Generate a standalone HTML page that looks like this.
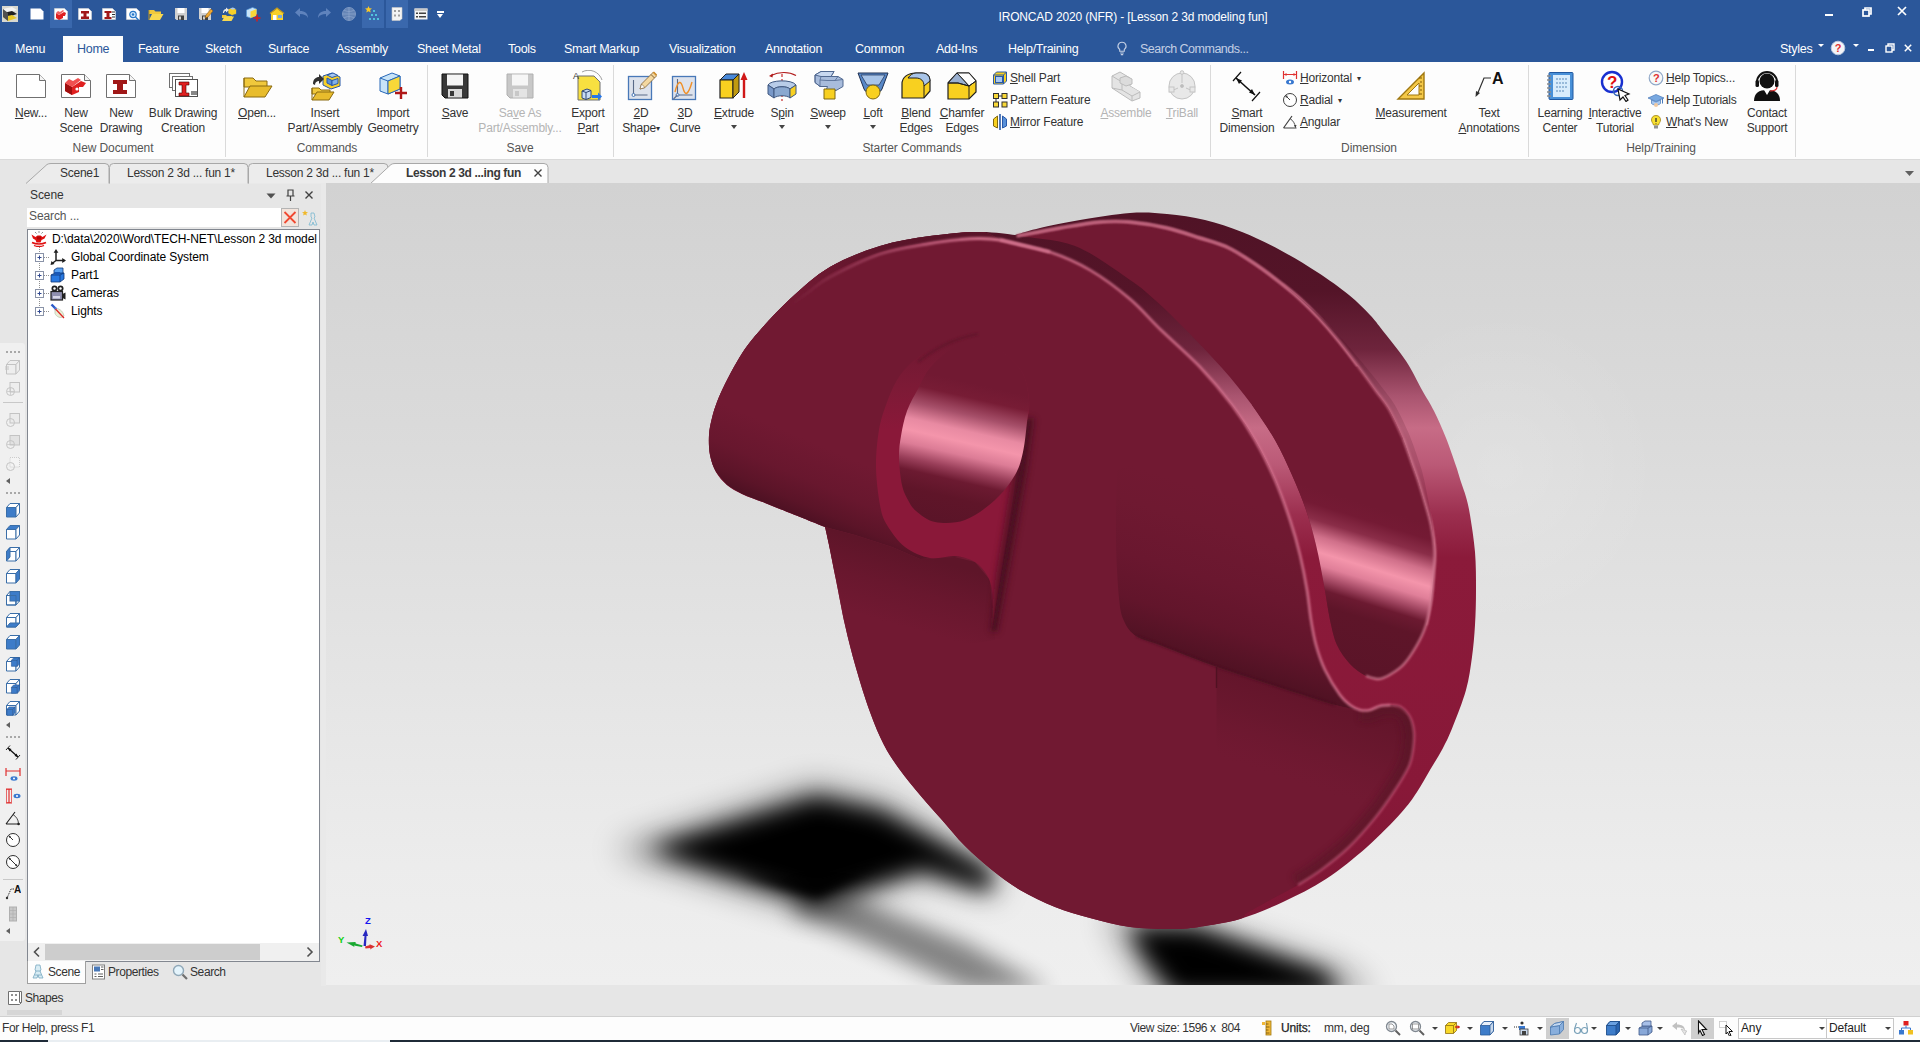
<!DOCTYPE html>
<html lang="en">
<head>
<meta charset="utf-8">
<title>IRONCAD 2020 (NFR) - [Lesson 2 3d modeling fun]</title>
<style>
*{box-sizing:border-box;margin:0;padding:0}
html,body{width:1920px;height:1042px;overflow:hidden;background:#e6e6e6;font-family:"Liberation Sans",sans-serif;font-size:12px;color:#262626}
.abs{position:absolute}
#app{position:absolute;left:0;top:0;width:1920px;height:1042px;overflow:hidden;background:#e6e6e6}
/* title + menu */
#titlebar{position:absolute;left:0;top:0;width:1920px;height:62px;background:#2b579a}
#title{position:absolute;left:933px;top:10px;width:400px;text-align:center;color:#fff;font-size:12px;white-space:nowrap;letter-spacing:-0.15px}
.mt{position:absolute;top:42px;color:#fff;font-size:12.5px;white-space:nowrap;letter-spacing:-0.27px}
#hometab{position:absolute;left:63px;top:36px;width:60px;height:27px;background:#fdfdfd}
/* ribbon */
#ribbon{position:absolute;left:0;top:62px;width:1920px;height:98px;background:#fdfdfd;border-bottom:1px solid #dadada}
.sep{position:absolute;top:65px;width:1px;height:92px;background:#dadada}
.gl{position:absolute;top:141px;font-size:12px;color:#555;white-space:nowrap;text-align:center;letter-spacing:-0.1px}
.bl{position:absolute;font-size:12px;color:#333;white-space:nowrap;text-align:center;line-height:15px;letter-spacing:-0.2px;transform:translateX(-50%)}
.bl.dis{color:#b4b4b4}
.sl{position:absolute;font-size:12px;color:#333;white-space:nowrap;letter-spacing:-0.2px}
u{text-decoration:underline;text-underline-offset:1px}
/* doc tabs */
#tabstrip{position:absolute;left:0;top:160px;width:1920px;height:24px;background:#e6e6e6}
.dt{position:absolute;top:166px;font-size:12px;color:#333;white-space:nowrap;letter-spacing:-0.25px}
/* left panel */
#ltool{position:absolute;left:0;top:184px;width:26px;height:810px;background:#e6e6e6}
#panel{position:absolute;left:26px;top:184px;width:295px;height:802px;background:#e6e6e6}
#tree{position:absolute;left:27px;top:229px;width:293px;height:733px;background:#fff;border:1px solid #828790}
.tr{position:absolute;font-size:12px;color:#000;white-space:nowrap;letter-spacing:-0.1px}
/* viewport */
#view{position:absolute;left:326px;top:183px;width:1594px;height:802px;overflow:hidden;background:#e4e4e4}
/* status */
#status{position:absolute;left:0;top:1016px;width:1920px;height:24px;background:#fdfdfd;border-top:1px solid #d0d0d0}
.st{position:absolute;top:1021px;font-size:12px;color:#333;white-space:nowrap;letter-spacing:-0.15px}
#taskbar{position:absolute;left:0;top:1040px;width:1920px;height:2px;background:#1f2b38}
</style>
</head>
<body>
<div id="app">

<!-- ============ TITLE BAR ============ -->
<div id="titlebar"></div>
<div id="title">IRONCAD 2020 (NFR) - [Lesson 2 3d modeling fun]</div>
<!--QAT-->
<div class="abs" style="left:50px;top:0;width:22px;height:28px;background:#3a68ad"></div>
<div class="abs" style="left:362px;top:0;width:22px;height:28px;background:#3a68ad"></div>
<div class="abs" style="left:386px;top:0;width:22px;height:28px;background:#3a68ad"></div>
<svg class="abs" style="left:2px;top:6px" width="16" height="16" viewBox="0 0 16 16"><rect x="0" y="0" width="16" height="16" fill="#d8d8d0"/><path d="M1 3l9-2 5 3-9 3z" fill="#f4f4f4"/><path d="M1 7l9-2 5 3-9 3z" fill="#202020"/><path d="M1 11l9-2 5 3-9 3z" fill="#e8c828"/><path d="M1 3v8l5 4V7z" fill="#505050"/></svg>
<svg class="abs" style="left:29px;top:6px" width="16" height="16" viewBox="0 0 16 16"><path d="M1.500 2.500h10l3 3v8h-13z" fill="#fff"/></svg>
<svg class="abs" style="left:53px;top:6px" width="16" height="16" viewBox="0 0 16 16"><path d="M1.500 2.500h10l3 3v8h-13z" fill="#fff" stroke="#d8d8d8" stroke-width=".6"/><path d="M3 7l3 2 5-3 2 1-1 3-2 0v2l-4 2-3-2z" fill="#e02020"/><path d="M5 5l2 1 3-2 1 1-5 4-3-2z" fill="#f06060"/></svg>
<svg class="abs" style="left:77px;top:6px" width="16" height="16" viewBox="0 0 16 16"><path d="M1.500 2.500h10l3 3v8h-13z" fill="#fff" stroke="#d8d8d8" stroke-width=".6"/><path d="M4 5h8v2.500H9.500v3H12V13H4v-2.500h2.500v-3H4z" fill="#a01818"/></svg>
<svg class="abs" style="left:101px;top:6px" width="16" height="16" viewBox="0 0 16 16"><path d="M1.500 2.500h10l3 3v8h-13z" fill="#fff" stroke="#d8d8d8" stroke-width=".6"/><path d="M3.500 5h7v2H8.500v4h2v2h-7v-2h2V7h-2z" fill="#a01818"/><path d="M11 6h3M11 8.500h3M11 11h3" stroke="#303030" stroke-width="1.200"/></svg>
<svg class="abs" style="left:125px;top:6px" width="16" height="16" viewBox="0 0 16 16"><path d="M1.500 2.500h10l3 3v8h-13z" fill="#fff" stroke="#d8d8d8" stroke-width=".6"/><circle cx="8" cy="8.500" r="3.200" fill="#d0e8fc" stroke="#2878c8" stroke-width="1.200"/><circle cx="8" cy="8.500" r="1.200" fill="#2878c8"/><path d="M10.500 11l3 3" stroke="#2878c8" stroke-width="1.400"/></svg>
<svg class="abs" style="left:148px;top:6px" width="16" height="16" viewBox="0 0 16 16"><path d="M1 4h5l1.500 1.500H13V8H1z" fill="#f0c83c"/><path d="M1 14l3-6h11.500l-3.500 6z" fill="#f8d850"/><path d="M1 14V4" stroke="#c09820"/></svg>
<svg class="abs" style="left:173px;top:6px" width="16" height="16" viewBox="0 0 16 16"><path d="M2 2h12v12H3.500L2 12.500z" fill="#d0d0d0"/><rect x="4.500" y="2" width="7" height="5" fill="#fff"/><rect x="5" y="9.500" width="6" height="4.500" fill="#404040"/><rect x="6" y="10.500" width="2" height="3" fill="#d0d0d0"/></svg>
<svg class="abs" style="left:197px;top:6px" width="16" height="16" viewBox="0 0 16 16"><path d="M2 2h12v12H3.500L2 12.500z" fill="#d0d0d0"/><rect x="4.500" y="2" width="7" height="5" fill="#fff"/><rect x="5" y="9.500" width="6" height="4.500" fill="#404040"/><rect x="6" y="10.500" width="2" height="3" fill="#d0d0d0"/><path d="M8 12l1-3 5-6 2 2-5 6z" fill="#f0a830" stroke="#805010" stroke-width=".5"/></svg>
<svg class="abs" style="left:221px;top:6px" width="16" height="16" viewBox="0 0 16 16"><path d="M1 9h4l1 1h5v2H1z" fill="#f0c83c"/><path d="M1 15l2.500-4.500H13L10.500 15z" fill="#f8d850"/><path d="M7 3l4.500-1.500 4 2v4.500L11 9.500l-4-2z" fill="#f8d028" stroke="#2858a8" stroke-width=".7"/><path d="M9 2.500l3-1 2.500 1.200-3 1z" fill="#a8c8f0"/><path d="M2 7c0-3 1.500-4 3-4V1.500L8 4 5 6.500V5c-1 0-2 .5-2 2z" fill="#e8e8e8"/></svg>
<svg class="abs" style="left:245px;top:6px" width="16" height="16" viewBox="0 0 16 16"><path d="M1.500 4l6-2.500 4 1.500v6.500l-6 2.500-4-1.500z" fill="#c8e4f8" stroke="#5898d8" stroke-width=".7"/><path d="M5.500 5.500l6-2.500v6.500l-6 2.500z" fill="#f8d838"/><path d="M12 8.500v7M8.500 12h7" stroke="#d02020" stroke-width="1.600"/></svg>
<svg class="abs" style="left:269px;top:6px" width="16" height="16" viewBox="0 0 16 16"><path d="M2 7l6-4.500L14 7v7H2z" fill="#f8d028"/><path d="M1 7.500l7-5.500 7 5.500" fill="none" stroke="#c09820" stroke-width="1.200"/><rect x="4" y="9" width="3.500" height="5" fill="#fff"/><rect x="9" y="9" width="4" height="3" fill="#78a8e0"/></svg>
<svg class="abs" style="left:293px;top:6px" width="16" height="16" viewBox="0 0 16 16"><path d="M2 6.500l5-4.500v3c5 0 8 2.500 8 7-1.500-3-4-4-8-4v3z" fill="#5f83bd"/></svg>
<svg class="abs" style="left:317px;top:6px" width="16" height="16" viewBox="0 0 16 16"><path d="M14 6.500l-5-4.500v3c-5 0-8 2.500-8 7 1.500-3 4-4 8-4v3z" fill="#5f83bd"/></svg>
<svg class="abs" style="left:341px;top:6px" width="16" height="16" viewBox="0 0 16 16"><circle cx="8" cy="8" r="6.500" fill="#6685b5" stroke="#7a96c2"/><path d="M1.500 8h13M8 1.500v13M3 4c3 2 7 2 10 0M3 12c3-2 7-2 10 0" fill="none" stroke="#8aa3cb" stroke-width=".8"/></svg>
<svg class="abs" style="left:365px;top:6px" width="16" height="16" viewBox="0 0 16 16"><path d="M3.500 0l1 2.300 2.500.2-1.900 1.600.6 2.400-2.200-1.300-2.200 1.300.6-2.400L0 2.500l2.500-.2z" fill="#f8c828"/><g fill="#58d8e8"><circle cx="9" cy="5" r="1.100"/><circle cx="7" cy="9" r="1.100"/><circle cx="11" cy="9" r="1.100"/><circle cx="5" cy="13" r="1.100"/><circle cx="9" cy="13" r="1.100"/><circle cx="13" cy="13" r="1.100"/></g></svg>
<svg class="abs" style="left:389px;top:6px" width="16" height="16" viewBox="0 0 16 16"><path d="M3 1.500h10v11l-2 2H3z" fill="#f4f4f4" stroke="#c8c8c8" stroke-width=".6"/><g fill="#a0a0a0"><rect x="5" y="4" width="2" height="2"/><rect x="9" y="4" width="2" height="2"/><rect x="5" y="8.500" width="2" height="2"/><rect x="9" y="8.500" width="2" height="2"/></g></svg>
<svg class="abs" style="left:413px;top:6px" width="16" height="16" viewBox="0 0 16 16"><rect x="1.500" y="2.500" width="13" height="11" fill="#f4f4f4"/><path d="M1.500 2.500h13v2.500h-13z" fill="#c8c8c8"/><g fill="#404040"><rect x="3" y="6.500" width="2" height="1.500"/><rect x="6" y="6.500" width="7" height="1.500"/><rect x="3" y="10" width="2" height="1.500"/><rect x="6" y="10" width="7" height="1.500"/></g></svg>
<div class="abs" style="left:437px;top:11px;width:7px;height:1.5px;background:#fff"></div><div class="abs" style="left:437px;top:14px;border:3.500px solid transparent;border-top:4px solid #fff;width:0;height:0"></div>
<!--/QAT-->
<!--WINCTL-->
<div class="abs" style="left:1825px;top:14px;width:8px;height:2px;background:#fff"></div>
<svg class="abs" style="left:1862px;top:7px" width="10" height="10" viewBox="0 0 10 10"><path d="M3 3V1h6v6H7" fill="none" stroke="#fff" stroke-width="1.700"/><rect x="1" y="3" width="6" height="6" fill="none" stroke="#fff" stroke-width="1.700"/></svg>
<svg class="abs" style="left:1897px;top:6px" width="10" height="10" viewBox="0 0 10 10"><path d="M1 1l8 8M9 1l-8 8" stroke="#fff" stroke-width="1.700"/></svg>
<!--/WINCTL-->

<!-- ============ MENU TABS ============ -->
<div id="hometab"></div>
<div class="mt" style="left:15px">Menu</div>
<div class="mt" style="left:77px;color:#2b579a">Home</div>
<div class="mt" style="left:138px">Feature</div>
<div class="mt" style="left:205px">Sketch</div>
<div class="mt" style="left:268px">Surface</div>
<div class="mt" style="left:336px">Assembly</div>
<div class="mt" style="left:417px">Sheet Metal</div>
<div class="mt" style="left:508px">Tools</div>
<div class="mt" style="left:564px">Smart Markup</div>
<div class="mt" style="left:669px">Visualization</div>
<div class="mt" style="left:765px">Annotation</div>
<div class="mt" style="left:855px">Common</div>
<div class="mt" style="left:936px">Add-Ins</div>
<div class="mt" style="left:1008px">Help/Training</div>
<div class="mt" style="left:1140px;color:#c3cfe4;letter-spacing:-0.5px">Search Commands...</div>
<div class="mt" style="left:1780px">Styles</div>
<!--MENUICONS-->
<svg class="abs" style="left:1116px;top:41px" width="12" height="15" viewBox="0 0 12 15"><path d="M6 1.200a4 4 0 0 0-2.300 7.300v1.800h4.600V8.500A4 4 0 0 0 6 1.200z" fill="none" stroke="#c3cfe4" stroke-width="1.100"/><path d="M4.200 12h3.600M4.800 13.600h2.400" stroke="#c3cfe4" stroke-width="1.100"/></svg>
<div class="abs" style="left:1818px;top:44px;border:3px solid transparent;border-top:3.500px solid #fff;width:0;height:0"></div>
<svg class="abs" style="left:1830px;top:40px" width="16" height="16" viewBox="0 0 16 16"><circle cx="8" cy="8" r="6.800" fill="#f4f4f8" stroke="#b8c8e0" stroke-width="1"/><text x="4.800" y="12" font-family="Liberation Sans,sans-serif" font-weight="700" font-size="11" fill="#e03030">?</text></svg>
<div class="abs" style="left:1853px;top:44px;border:3px solid transparent;border-top:3.500px solid #fff;width:0;height:0"></div>
<div class="abs" style="left:1868px;top:49px;width:6px;height:2px;background:#fff"></div>
<svg class="abs" style="left:1885px;top:43px" width="10" height="10" viewBox="0 0 10 10"><path d="M3 3V1h6v6H7" fill="none" stroke="#fff" stroke-width="1.400"/><rect x="1" y="3" width="6" height="6" fill="none" stroke="#fff" stroke-width="1.400"/></svg>
<svg class="abs" style="left:1904px;top:44px" width="8" height="8" viewBox="0 0 8 8"><path d="M.800.800l6.400 6.400M7.200.800L.800 7.200" stroke="#fff" stroke-width="1.500"/></svg>
<!--/MENUICONS-->

<!-- ============ RIBBON ============ -->
<div id="ribbon"></div>
<!--RIBBON-->
<svg class="abs" style="left:15px;top:70px" width="32" height="32" viewBox="0 0 32 32"><path d="M1.5 4.5h23l6 6v17h-29z" fill="#fff" stroke="#707070"/><path d="M24.5 4.5v6h6" fill="#f4f4f4" stroke="#707070"/></svg>
<div class="bl" style="left:31px;top:106px"><u>N</u>ew...</div>
<svg class="abs" style="left:60px;top:70px" width="32" height="32" viewBox="0 0 32 32"><path d="M1.5 4.5h23l6 6v17h-29z" fill="#fff" stroke="#707070"/><path d="M24.5 4.5v6h6" fill="#f4f4f4" stroke="#707070"/><path d="M5 13l7 4 9-6 5 2-3 4-4 0 0 5-7 3-7-4z" fill="#e02020"/><path d="M5 13l7 4v8l-7-4z" fill="#a01010"/><path d="M9 9l4 2 5-3 3 2-9 7-7-4z" fill="#f05050"/><circle cx="17" cy="19" r="1.6" fill="#fff"/></svg>
<div class="bl" style="left:76px;top:106px">New<br>Scene</div>
<svg class="abs" style="left:105px;top:70px" width="32" height="32" viewBox="0 0 32 32"><path d="M1.5 4.5h23l6 6v17h-29z" fill="#fff" stroke="#707070"/><path d="M24.5 4.5v6h6" fill="#f4f4f4" stroke="#707070"/><path d="M8 10h14v4h-4v6h4v4H8v-4h4v-6H8z" fill="#a01818"/></svg>
<div class="bl" style="left:121px;top:106px">New<br>Drawing</div>
<svg class="abs" style="left:167px;top:70px" width="32" height="32" viewBox="0 0 32 32"><rect x="2.5" y="3.5" width="20" height="14" fill="#fff" stroke="#707070"/><rect x="5.5" y="6.5" width="20" height="14" fill="#fff" stroke="#707070"/><rect x="8.5" y="9.5" width="22" height="17" fill="#fff" stroke="#505050"/><path d="M12 12h10v3h-3v8h3v3H12v-3h3v-8h-3z" fill="#e02020" stroke="#400" stroke-width=".6"/><rect x="24" y="21" width="6" height="4" fill="#888"/></svg>
<div class="bl" style="left:183px;top:106px">Bulk Drawing<br>Creation</div>
<svg class="abs" style="left:241px;top:70px" width="32" height="32" viewBox="0 0 32 32"><path d="M3 8h9l3 3h11v6H3z" fill="#f0c83c" stroke="#8a6a10"/><path d="M3 27V15h4l2-2h0" fill="none"/><path d="M3 27l6-11h22l-7 11z" fill="#e8bc2c" stroke="#8a6a10"/><path d="M3 27V8" stroke="#8a6a10"/></svg>
<div class="bl" style="left:257px;top:106px"><u>O</u>pen...</div>
<svg class="abs" style="left:309px;top:70px" width="32" height="32" viewBox="0 0 32 32"><path d="M3 18h7l2 2h9v4H3z" fill="#f0c83c" stroke="#8a6a10"/><path d="M3 30l5-8h17l-5 8z" fill="#e8bc2c" stroke="#8a6a10"/><path d="M3 30V18" stroke="#8a6a10"/><path d="M14 6l9-3 8 4v9l-9 3-8-4z" fill="#f8d028" stroke="#2858a8"/><path d="M18 5l6-2 5 2.5-6 2z" fill="#a8c8f0" stroke="#2858a8"/><path d="M18 8l5 2.5v5l-5-2.5z" fill="#5890d8" stroke="#2858a8"/><path d="M23 10.5l6-2v5l-6 2z" fill="#80b0e8" stroke="#2858a8"/><path d="M4 14c0-5 3-7 6-7V4l5 5-5 5v-3c-2 0-4 1-4 4z" fill="#303030"/></svg>
<div class="bl" style="left:325px;top:106px">Insert<br>Part/Assembly</div>
<svg class="abs" style="left:377px;top:70px" width="32" height="32" viewBox="0 0 32 32"><path d="M3 8l12-5 8 3v13l-12 5-8-3z" fill="#c8e4f8" stroke="#2868b8"/><path d="M3 8l8 3 12-5" fill="none" stroke="#2868b8"/><path d="M11 11v13" stroke="#2868b8"/><path d="M11 11l12-5v13l-12 5z" fill="#f8d838" stroke="#2868b8"/><path d="M24 17v12M18 23h12" stroke="#b01818" stroke-width="2.4"/></svg>
<div class="bl" style="left:393px;top:106px">Import<br>Geometry</div>
<svg class="abs" style="left:439px;top:70px" width="32" height="32" viewBox="0 0 32 32"><path d="M3 4h26v24H6l-3-3z" fill="#383838" stroke="#101010"/><rect x="8" y="4.5" width="16" height="11" fill="#f4f4f4"/><rect x="9" y="19" width="14" height="8.5" fill="#d8d8d8"/><rect x="11" y="21" width="4" height="5" fill="#383838"/></svg>
<div class="bl" style="left:455px;top:106px"><u>S</u>ave</div>
<svg class="abs" style="left:504px;top:70px" width="32" height="32" viewBox="0 0 32 32"><path d="M3 4h26v24H6l-3-3z" fill="#c8c8c8" stroke="#b0b0b0"/><rect x="8" y="4.5" width="16" height="11" fill="#f6f6f6"/><rect x="9" y="19" width="14" height="8.5" fill="#e4e4e4"/><rect x="11" y="21" width="4" height="5" fill="#c8c8c8"/></svg>
<div class="bl dis" style="left:520px;top:106px">Sa<u>v</u>e As<br>Part/Assembly...</div>
<svg class="abs" style="left:572px;top:70px" width="32" height="32" viewBox="0 0 32 32"><path d="M6 6h16l6 6v18H6z" fill="#f8e040" stroke="#707070"/><path d="M10 2a14 14 0 0 1 20 8" fill="none" stroke="#888" stroke-width=".8"/><text x="1" y="9" font-family="Liberation Sans,sans-serif" font-size="9" fill="#333">A</text><path d="M10 21l5-2 4 1.5v7l-5 2-4-1.5z" fill="#c8dcf4" stroke="#304878"/><path d="M10 21l4 1.5 5-2M14 22.500v7" fill="none" stroke="#304878"/><path d="M20 25h6v-2.500l4 4-4 4V28h-6z" fill="#2878e8"/></svg>
<div class="bl" style="left:588px;top:106px">Export<br><u>P</u>art</div>
<svg class="abs" style="left:625px;top:70px" width="32" height="32" viewBox="0 0 32 32"><rect x="3.500" y="6.500" width="23" height="23" fill="#dde2ec" stroke="#4878b8" stroke-width="1.300"/><path d="M8.500 10v15h14" fill="none" stroke="#5a6a88" stroke-width="1.100"/><circle cx="8.500" cy="25" r="1.500" fill="#fff" stroke="#4878b8"/><path d="M15 19l1.500-5 12-12 3.500 3.500-12 12z" fill="#f4d8a0" stroke="#806030" stroke-width=".800"/><path d="M15 19l1.500-5 3.500 3.500z" fill="#fff" stroke="#806030" stroke-width=".600"/><path d="M26 4.500l3.500 3.500" stroke="#806030"/><path d="M27.500 2.500l3.500 3.500 1-1.500-3-3z" fill="#d09030"/></svg>
<div class="bl" style="left:641px;top:106px"><u>2</u>D<br>Shape<span style="font-size:8px;position:relative;top:-1px">&#9662;</span></div>
<svg class="abs" style="left:669px;top:70px" width="32" height="32" viewBox="0 0 32 32"><rect x="3.500" y="6.500" width="23" height="23" fill="#dde2ec" stroke="#4878b8" stroke-width="1.300"/><path d="M8.500 9v16h15" fill="none" stroke="#5a6a88" stroke-width="1.100"/><circle cx="8.500" cy="25" r="1.500" fill="#fff" stroke="#4878b8"/><path d="M8.500 25l-4 4" stroke="#5a6a88" stroke-width="1.100"/><path d="M6 22c3-12 6-12 8-4s5 8 9-6" fill="none" stroke="#f09028" stroke-width="1.400"/></svg>
<div class="bl" style="left:685px;top:106px"><u>3</u>D<br>Curve</div>
<svg class="abs" style="left:718px;top:70px" width="32" height="32" viewBox="0 0 32 32"><path d="M2 10l6-6h13l-6 6z" fill="#4888d8" stroke="#202020"/><path d="M2 10h13v18H2z" fill="#f8d020" stroke="#202020" stroke-width="1.200"/><path d="M15 10l6-6v18l-6 6z" fill="#c09a10" stroke="#202020"/><path d="M26 28V8" stroke="#d01818" stroke-width="2.400"/><path d="M22.500 10l3.500-8 3.500 8z" fill="#d01818"/></svg>
<div class="bl" style="left:734px;top:106px"><u>E</u>xtrude</div>
<div class="abs" style="left:731px;top:125px;border:3px solid transparent;border-top:4px solid #444;width:0;height:0"></div>
<svg class="abs" style="left:766px;top:70px" width="32" height="32" viewBox="0 0 32 32"><path d="M3 6l4-2.500-.500 4z" fill="#b01818"/><path d="M5 5.500c8-4 18-4 25 0" fill="none" stroke="#b01818" stroke-width="1.200"/><path d="M16 4v27" stroke="#c01818" stroke-dasharray="3 2" stroke-width="1.100"/><path d="M2 15c2-5 24-6 28 0l-6 4c-3-3-13-3-16 0z" fill="#b8cce8" stroke="#405880"/><path d="M2 15l6 4v9l-6-4z" fill="#7898c8" stroke="#405880"/><path d="M8 19c3-3 13-3 16 0v9c-3-3-13-3-16 0z" fill="#8aa8d0" stroke="#405880"/><path d="M24 19l6-4v9l-6 4z" fill="#f8d020" stroke="#405880"/></svg>
<div class="bl" style="left:782px;top:106px">S<u>p</u>in</div>
<div class="abs" style="left:779px;top:125px;border:3px solid transparent;border-top:4px solid #444;width:0;height:0"></div>
<svg class="abs" style="left:812px;top:70px" width="32" height="32" viewBox="0 0 32 32"><path d="M3 5l6-3.500h13l-3 5h7l5 3v7l-7 4H14l1.500-4H8l-5-4z" fill="#a8bcdc" stroke="#506890"/><path d="M3 5l6-3.500h13l-3 5H9z" fill="#c8d8f0" stroke="#506890"/><path d="M3 5v7.500l5 4V10l1-3.500M26 6.500l-3 4h-8l-7-.500M23 10.500l8 -1" fill="none" stroke="#506890" stroke-width=".800"/><path d="M12 19h11v10H12z" fill="#f8d020" stroke="#806810"/></svg>
<div class="bl" style="left:828px;top:106px"><u>S</u>weep</div>
<div class="abs" style="left:825px;top:125px;border:3px solid transparent;border-top:4px solid #444;width:0;height:0"></div>
<svg class="abs" style="left:857px;top:70px" width="32" height="32" viewBox="0 0 32 32"><path d="M1 3h30l-6 16c-2 6-16 6-18 0z" fill="#5888c8" stroke="#203050"/><path d="M4 5h24l-6 10H10z" fill="#a8c4e8" stroke="#203050" stroke-width=".7"/><circle cx="16" cy="22" r="7" fill="#f8d020" stroke="#806810"/></svg>
<div class="bl" style="left:873px;top:106px"><u>L</u>oft</div>
<div class="abs" style="left:870px;top:125px;border:3px solid transparent;border-top:4px solid #444;width:0;height:0"></div>
<svg class="abs" style="left:900px;top:70px" width="32" height="32" viewBox="0 0 32 32"><path d="M2 12c0-6 6-9 14-9h14v8c0 0 0 0 0 0l-4 18H2z" fill="none"/><path d="M2 28V14C2 7 8 3 16 3h6c5 0 8 3 8 8v10l-6 7z" fill="#f8d020" stroke="#202020" stroke-width="1.200"/><path d="M16 3h6c5 0 8 3 8 8l-6 5c0-5-3-8-8-8H8c2-3 5-5 8-5z" fill="#a8c4e8" stroke="#202020"/><path d="M24 16v12" stroke="#202020"/></svg>
<div class="bl" style="left:916px;top:106px"><u>B</u>lend<br>Edges</div>
<svg class="abs" style="left:946px;top:70px" width="32" height="32" viewBox="0 0 32 32"><path d="M2 13L11 3h12l7 8v11l-7 7H2z" fill="#f8d020" stroke="#202020" stroke-width="1.200"/><path d="M11 3h12l7 8-7 5z" fill="#fdfdfd" stroke="#202020"/><path d="M2 13L11 3l12 13-11 -3z" fill="#9ab0d0" stroke="#202020"/><path d="M2 13l10 0 11 3v13M23 16l7-5" fill="none" stroke="#202020"/><path d="M2 13h10l11 3" fill="none"/></svg>
<div class="bl" style="left:962px;top:106px"><u>C</u>hamfer<br>Edges</div>
<svg class="abs" style="left:1110px;top:70px" width="32" height="32" viewBox="0 0 32 32"><g fill="#e4e4e4" stroke="#bcbcbc"><path d="M2 6l8-4 10 6v8l10 6v6l-8 3L2 18z"/><path d="M2 6l10 6 8-4M12 12v8l10 6 8-4M12 20L2 18M22 26v5"/><path d="M10 8l6-2 6 3v5l-6 2-6-3z" fill="#dcdcdc"/></g></svg>
<div class="bl dis" style="left:1126px;top:106px"><u>A</u>ssemble</div>
<svg class="abs" style="left:1166px;top:70px" width="32" height="32" viewBox="0 0 32 32"><g fill="#e8e8e8" stroke="#c4c4c4"><circle cx="16" cy="16" r="13"/><path d="M16 3v10M3 22l9-4M29 22l-9-4" fill="none"/><circle cx="16" cy="2.500" r="1.800"/><rect x="3" y="17" width="5" height="5"/><rect x="24" y="17" width="5" height="5"/><circle cx="16" cy="16" r="1.500" fill="#bbb"/></g></svg>
<div class="bl dis" style="left:1182px;top:106px"><u>T</u>riBall</div>
<svg class="abs" style="left:1231px;top:70px" width="32" height="32" viewBox="0 0 32 32"><path d="M5 8l19 17" stroke="#101010" stroke-width="1.600"/><path d="M5 8l6 2.500-3 3.500zM24 25l-6-2.500 3-3.500z" fill="#101010"/><path d="M2 11l8-9M21 31l8-9" stroke="#101010" stroke-width="1.200"/></svg>
<div class="bl" style="left:1247px;top:106px"><u>S</u>mart<br>Dimension</div>
<svg class="abs" style="left:1395px;top:70px" width="32" height="32" viewBox="0 0 32 32"><path d="M3 29h26V3z" fill="#f4c848" stroke="#a07810" stroke-width="1.400"/><path d="M12 25h12V13z" fill="#fdfdfd" stroke="#a07810"/><path d="M27 8h-3M27 12h-2M27 16h-3M27 20h-2M27 24h-3" stroke="#805c08"/></svg>
<div class="bl" style="left:1411px;top:106px"><u>M</u>easurement</div>
<svg class="abs" style="left:1473px;top:70px" width="32" height="32" viewBox="0 0 32 32"><text x="19" y="14" font-family="Liberation Sans,sans-serif" font-weight="700" font-size="16" fill="#101010">A</text><path d="M18 8h-7L4 25" fill="none" stroke="#303030" stroke-width="1.200"/><path d="M2.500 27l.5-6 4 2z" fill="#303030"/></svg>
<div class="bl" style="left:1489px;top:106px">Text<br><u>A</u>nnotations</div>
<svg class="abs" style="left:1544px;top:70px" width="32" height="32" viewBox="0 0 32 32"><rect x="5" y="2.500" width="24" height="27" rx="1" fill="#4890d8" stroke="#2058a0"/><rect x="9" y="5" width="17" height="22" fill="#d8ecfc"/><path d="M12 9h11M12 13h11M12 17h11M12 21h8" stroke="#5888b8" stroke-width="1.200" stroke-dasharray="2 1"/><path d="M3 6h4M3 10h4M3 14h4M3 18h4M3 22h4M3 26h4" stroke="#8a8a8a" stroke-width="1.600"/></svg>
<div class="bl" style="left:1560px;top:106px">Learning<br>Center</div>
<svg class="abs" style="left:1599px;top:70px" width="32" height="32" viewBox="0 0 32 32"><circle cx="13" cy="12" r="10" fill="#fff" stroke="#1830d0" stroke-width="2.400"/><text x="8" y="18" font-family="Liberation Sans,sans-serif" font-weight="700" font-size="17" fill="#e01010">?</text><circle cx="19" cy="21" r="4.500" fill="none" stroke="#3868b8" stroke-width="1.500"/><path d="M19 19l11 5-4 1.500 3 4.500-2 1.500-3-4.500-3 3z" fill="#fff" stroke="#101010" stroke-width="1.200"/></svg>
<div class="bl" style="left:1615px;top:106px"><u>I</u>nteractive<br>Tutorial</div>
<svg class="abs" style="left:1751px;top:70px" width="32" height="32" viewBox="0 0 32 32"><circle cx="16" cy="11" r="7.500" fill="#101010"/><path d="M3 31c0-8 5-11 13-11s13 3 13 11z" fill="#101010"/><path d="M6 12a10 10 0 0 1 20 0" fill="none" stroke="#101010" stroke-width="2"/><rect x="4.500" y="10" width="3.500" height="7" rx="1.500" fill="#101010"/><rect x="24" y="10" width="3.500" height="7" rx="1.500" fill="#101010"/><path d="M26 17c0 3-3 4-7 4" fill="none" stroke="#e03030" stroke-width="1.200"/><path d="M13 20l3 5 3-5z" fill="#fff"/></svg>
<div class="bl" style="left:1767px;top:106px">Contact<br>Support</div>
<svg class="abs" style="left:992px;top:70px" width="16" height="16" viewBox="0 0 16 16"><path d="M1.500 5l3-3h10v9l-3 3h-10z" fill="#f8d020" stroke="#2858a8"/><rect x="3.500" y="6.500" width="7" height="6" fill="#a8c8f0" stroke="#2858a8"/><path d="M11.500 5v9M1.500 5h10l3-3" fill="none" stroke="#2858a8"/></svg>
<div class="sl" style="left:1010px;top:71px"><u>S</u>hell Part</div>
<svg class="abs" style="left:992px;top:92px" width="16" height="16" viewBox="0 0 16 16"><g fill="#f8d838" stroke="#303030"><rect x="1.500" y="1.500" width="5" height="5"/><rect x="10" y="1.500" width="5" height="5"/><rect x="1.500" y="10" width="5" height="5"/><rect x="10" y="10" width="5" height="5"/></g><path d="M6.500 4h3.500M4 6.500v3.500" stroke="#303030"/></svg>
<div class="sl" style="left:1010px;top:93px">Pattern Feature</div>
<svg class="abs" style="left:992px;top:114px" width="16" height="16" viewBox="0 0 16 16"><path d="M1.500 5l4-3v12l-4-2z" fill="#f8d020" stroke="#806810"/><path d="M14.500 5l-4-3v12l4-2z" fill="#5890d8" stroke="#2858a8"/><path d="M8 0v16" stroke="#2858a8" stroke-width="1.600"/></svg>
<div class="sl" style="left:1010px;top:115px"><u>M</u>irror Feature</div>
<svg class="abs" style="left:1282px;top:70px" width="16" height="16" viewBox="0 0 16 16"><path d="M1.500 1v8M14.500 1v8M2 4.500h12" stroke="#e03030" stroke-width="1.200" fill="none"/><path d="M2 4.500l2.500-1.500v3zM14 4.500l-2.500-1.500v3z" fill="#e03030"/><ellipse cx="8" cy="12" rx="4" ry="2.500" fill="#3878d0"/><circle cx="8" cy="12" r="1.200" fill="#fff"/></svg>
<div class="sl" style="left:1300px;top:71px"><u>H</u>orizontal <span style="font-size:8px;position:relative;top:-1px;left:2px">&#9662;</span></div>
<svg class="abs" style="left:1282px;top:92px" width="16" height="16" viewBox="0 0 16 16"><circle cx="8" cy="8" r="6.500" fill="#fff" stroke="#404040"/><path d="M8 8L3.500 3.500" stroke="#404040"/><path d="M3 3l3 1-2 2z" fill="#404040"/></svg>
<div class="sl" style="left:1300px;top:93px"><u>R</u>adial <span style="font-size:8px;position:relative;top:-1px;left:2px">&#9662;</span></div>
<svg class="abs" style="left:1282px;top:114px" width="16" height="16" viewBox="0 0 16 16"><path d="M1.500 14h13M1.500 14L10 2" fill="none" stroke="#404040" stroke-width="1.200"/><path d="M8 4.500c3 2 5 5 5.500 9" fill="none" stroke="#404040" stroke-width=".9"/><path d="M12 11l1.500 3 1-3z" fill="#404040"/></svg>
<div class="sl" style="left:1300px;top:115px"><u>A</u>ngular</div>
<svg class="abs" style="left:1648px;top:70px" width="16" height="16" viewBox="0 0 16 16"><circle cx="8" cy="8" r="6.800" fill="#f8f8f8" stroke="#90a8c8" stroke-width="1.200"/><text x="5" y="12" font-family="Liberation Sans,sans-serif" font-weight="700" font-size="11" fill="#e03030">?</text></svg>
<div class="sl" style="left:1666px;top:71px"><u>H</u>elp Topics...</div>
<svg class="abs" style="left:1648px;top:92px" width="16" height="16" viewBox="0 0 16 16"><path d="M0 6l8-3.500 8 3.500-8 3.500z" fill="#78a8e0" stroke="#4878b8" stroke-width=".7"/><path d="M3.500 8v3.500c2 2 7 2 9 0V8L8 10z" fill="#a8c8f0" stroke="#4878b8" stroke-width=".7"/><path d="M14.500 6.500v5" stroke="#4878b8"/><circle cx="8" cy="13" r="2" fill="#f0c8a0"/></svg>
<div class="sl" style="left:1666px;top:93px">Help <u>T</u>utorials</div>
<svg class="abs" style="left:1648px;top:114px" width="16" height="16" viewBox="0 0 16 16"><path d="M8 1.500c-3 0-4.500 2-4.500 4.500 0 2 1.500 3 2 5h5c.5-2 2-3 2-5 0-2.500-1.500-4.500-4.500-4.500z" fill="#f8e030" stroke="#a08010" stroke-width=".8"/><rect x="6" y="11.500" width="4" height="3" fill="#909090"/><path d="M8 4v4M8 9.500v.5" stroke="#303030" stroke-width="1.300"/></svg>
<div class="sl" style="left:1666px;top:115px"><u>W</u>hat's New</div>
<div class="sep" style="left:225px"></div>
<div class="sep" style="left:427px"></div>
<div class="sep" style="left:613px"></div>
<div class="sep" style="left:1210px"></div>
<div class="sep" style="left:1528px"></div>
<div class="sep" style="left:1795px"></div>
<div class="gl" style="left:113px;width:200px;margin-left:-100px">New Document</div>
<div class="gl" style="left:327px;width:200px;margin-left:-100px">Commands</div>
<div class="gl" style="left:520px;width:200px;margin-left:-100px">Save</div>
<div class="gl" style="left:912px;width:200px;margin-left:-100px">Starter Commands</div>
<div class="gl" style="left:1369px;width:200px;margin-left:-100px">Dimension</div>
<div class="gl" style="left:1661px;width:200px;margin-left:-100px">Help/Training</div>
<!--/RIBBON-->

<!-- ============ DOC TABS ============ -->
<div id="tabstrip"></div>
<!--DOCTABS-->
<svg class="abs" style="left:0;top:160px" width="1920" height="24" viewBox="0 160 1920 24"><path d="M26 183.500L47 164.500Q48.500 163.500 51 163.500H105Q109 163.500 109 167.500V183.500" fill="#ececec" stroke="#a8a8a8"/><path d="M109.500 183.500V167.500Q109.500 163.500 113.500 163.500H244Q248 163.500 248 167.500V183.500" fill="#ececec" stroke="#a8a8a8"/><path d="M248.500 183.500V167.500Q248.500 163.500 252.500 163.500H384Q388 163.500 388 167.500V183.500" fill="#ececec" stroke="#a8a8a8"/><path d="M370 184L391 164.500Q392.500 163.500 395 163.500H544Q548 163.500 548 167.500V184Z" fill="#fdfdfd" stroke="#a8a8a8"/><path d="M371 184H548" stroke="#fdfdfd" stroke-width="1.500"/><path d="M534.500 169.500l7 7M541.500 169.500l-7 7" stroke="#404040" stroke-width="1.400"/><path d="M1905 171h9l-4.500 5z" fill="#606060"/></svg>
<div class="dt" style="left:60px">Scene1</div>
<div class="dt" style="left:127px">Lesson 2 3d ... fun 1*</div>
<div class="dt" style="left:266px">Lesson 2 3d ... fun 1*</div>
<div class="dt" style="left:406px;font-weight:700;letter-spacing:-0.35px;color:#383838">Lesson 2 3d ...ing fun</div>
<!--/DOCTABS-->

<!-- ============ LEFT ============ -->
<div id="ltool"></div>
<div class="abs" style="left:0;top:343px;width:25px;height:598px;background:#f0f0f0;border-radius:0 3px 3px 0"></div>
<div class="abs" style="left:320px;top:184px;width:6px;height:802px;background:#e9e9e9"></div>
<div id="panel"></div>
<div id="tree"></div>
<!--PANEL-->
<div class="tr" style="left:30px;top:188px;color:#333">Scene</div>
<svg class="abs" style="left:262px;top:186px" width="56" height="18" viewBox="0 0 56 18"><path d="M4.500 7.500h9l-4.500 5z" fill="#505050"/><path d="M26 4h5v6h-5zM24.500 10h8M28.500 10v5" fill="none" stroke="#404040" stroke-width="1.200"/><path d="M43.500 5.500l7 7M50.500 5.500l-7 7" stroke="#404040" stroke-width="1.400"/></svg>
<div class="abs" style="left:27px;top:208px;width:255px;height:19px;background:#fff"></div>
<div class="tr" style="left:29px;top:209px;color:#555">Search ...</div>
<div class="abs" style="left:281px;top:208px;width:18px;height:19px;background:#f2e4dc;border:1px solid #b4b4b4"></div>
<svg class="abs" style="left:283px;top:210px" width="14" height="15" viewBox="0 0 14 15"><path d="M1.500 2l11 11M12.500 2l-11 11" stroke="#f04830" stroke-width="1.800"/></svg>
<svg class="abs" style="left:302px;top:210px" width="16" height="16" viewBox="0 0 16 16"><path d="M9 3h3l1 4-1 1 3 7h-3l-1-3-1 3H7l3-7-1-1z" fill="none" stroke="#78b8d0" stroke-width=".8"/><path d="M3 0l.800 2 2.200.200-1.700 1.300.600 2.100L3 4.500 1.100 5.600l.600-2.100L0 2.200 2.200 2z" fill="#f0b828"/></svg>
<svg class="abs" style="left:28px;top:230px" width="40" height="90" viewBox="28 230 40 90"><path d="M39.500 247v64M44 257.500h6M44 275.500h6M44 293.500h6M44 311.500h6" stroke="#909090" stroke-dasharray="1 1" fill="none"/><rect x="35.500" y="253.5" width="8" height="8" fill="#fff" stroke="#8a93a8"/><path d="M37.500 257.5h4M39.500 255.5v4" stroke="#304890"/><rect x="35.500" y="271.5" width="8" height="8" fill="#fff" stroke="#8a93a8"/><path d="M37.500 275.5h4M39.500 273.5v4" stroke="#304890"/><rect x="35.500" y="289.5" width="8" height="8" fill="#fff" stroke="#8a93a8"/><path d="M37.500 293.5h4M39.500 291.5v4" stroke="#304890"/><rect x="35.500" y="307.5" width="8" height="8" fill="#fff" stroke="#8a93a8"/><path d="M37.500 311.5h4M39.500 309.5v4" stroke="#304890"/></svg>
<svg class="abs" style="left:31px;top:231px" width="16" height="16" viewBox="0 0 16 16"><path d="M8 0.500v2M4.500 1.500l1.500 1.500M11.500 1.500l-1.500 1.500" stroke="#202020" stroke-width="1" stroke-dasharray="1 1"/><path d="M0.500 3.500l4 2.500 2-1.500 3 0 2 1.500 4-2.500-2 4-3 1.500-1 2.500-4 0-1-2.500-2.500-1.500z" fill="#e01010"/><path d="M6 5.500h4v3H6z" fill="#b00808"/><path d="M1 11.500c2 1 4 1.500 7 1.500s5-.500 7-1.500" fill="none" stroke="#e01010" stroke-width="1.600"/><path d="M3 14.500c1.500.700 3 1 5 1s3.500-.300 5-1" fill="none" stroke="#e01010" stroke-width="1.300"/></svg>
<div class="tr" style="left:52px;top:232px;width:266px;overflow:hidden">D:\data\2020\Word\TECH-NET\Lesson 2 3d model</div>
<svg class="abs" style="left:50px;top:249px" width="16" height="16" viewBox="0 0 16 16"><path d="M6 2v9.500h8.500M6 11.500L1.500 15" fill="none" stroke="#202020" stroke-width="1.500"/><path d="M6 0l-2.400 3.800h4.800zM16 11.500l-3.800-2.400v4.800zM0.500 16l1-4 3 3z" fill="#202020"/></svg>
<div class="tr" style="left:71px;top:250px">Global Coordinate System</div>
<svg class="abs" style="left:50px;top:267px" width="16" height="16" viewBox="0 0 16 16"><path d="M1 8l4-2h9v6l-4 3H1z" fill="#2878e0" stroke="#103878" stroke-width=".8"/><path d="M4 3l3-2h6v5H4z" fill="#58a0f0" stroke="#103878" stroke-width=".8"/><path d="M1 8h9v7M10 8l4-2" fill="none" stroke="#103878" stroke-width=".8"/><path d="M5 5h5v3H5z" fill="#1858b8"/></svg>
<div class="tr" style="left:71px;top:268px">Part1</div>
<svg class="abs" style="left:50px;top:285px" width="16" height="16" viewBox="0 0 16 16"><circle cx="4.500" cy="3.500" r="3" fill="#202020"/><circle cx="10.500" cy="3.500" r="3" fill="#202020"/><circle cx="4.500" cy="3.500" r="1.200" fill="#fff"/><circle cx="10.500" cy="3.500" r="1.200" fill="#fff"/><rect x="1" y="6.500" width="11.500" height="8.500" fill="#9090b0" stroke="#202020" stroke-width="1.200"/><path d="M12.500 9l3-1.500v7l-3-1.500z" fill="#202020"/><rect x="3" y="11" width="7" height="2.500" fill="#d8d8e8"/></svg>
<div class="tr" style="left:71px;top:286px">Cameras</div>
<svg class="abs" style="left:50px;top:303px" width="16" height="16" viewBox="0 0 16 16"><path d="M5 6c3-1.500 8 1.500 9 7-3 3-7.500 1-9-2.500z" fill="#e8f0d8" stroke="#b8c0a8" stroke-width=".700"/><path d="M1.500 1.500l4.500 4.500" stroke="#2858c8" stroke-width="2.400"/><path d="M4.500 4l2.500 1-2 2.500z" fill="#5080e0"/><path d="M5.500 6l8.500 9" stroke="#e02020" stroke-width="1.200"/></svg>
<div class="tr" style="left:71px;top:304px">Lights</div>
<div class="abs" style="left:28px;top:943px;width:291px;height:18px;background:#f0f0f0"></div>
<div class="abs" style="left:45px;top:944px;width:215px;height:16px;background:#cdcdcd"></div>
<svg class="abs" style="left:28px;top:943px" width="291" height="18" viewBox="0 0 291 18"><path d="M11 4.500l-4.500 4.500 4.500 4.500M279.500 4.500l4.500 4.500-4.500 4.500" fill="none" stroke="#505050" stroke-width="1.600"/></svg>
<div class="abs" style="left:27px;top:961px;width:59px;height:23px;background:#fdfdfd;border:1px solid #a0a0a0;border-top:none"></div>
<svg class="abs" style="left:30px;top:964px" width="16" height="16" viewBox="0 0 16 16"><path d="M6 1h4l1 5-1 1 3 7H9l-1-3-1 3H3l3-7-1-1z" fill="#d8ecf4" stroke="#78a8c0" stroke-width=".8"/><path d="M5.500 7h5M4.500 11h7" stroke="#78a8c0" stroke-width=".8"/></svg>
<div class="tr" style="left:48px;top:965px;color:#333;letter-spacing:-0.4px">Scene</div>
<svg class="abs" style="left:91px;top:964px" width="16" height="16" viewBox="0 0 16 16"><rect x="1.500" y="1" width="12" height="14" fill="#fff" stroke="#808080"/><rect x="3" y="2.500" width="6" height="5" fill="#4878b8"/><path d="M10 3h2.500M10 5.500h2.500M3.500 10h2M7 10h5M3.500 12.500h2M7 12.500h5" stroke="#606060" stroke-width="1"/></svg>
<div class="tr" style="left:108px;top:965px;color:#333;letter-spacing:-0.4px">Properties</div>
<svg class="abs" style="left:172px;top:964px" width="16" height="16" viewBox="0 0 16 16"><circle cx="6.500" cy="6.500" r="5" fill="#e4f4fc" stroke="#90a8b8" stroke-width="1.400"/><path d="M10.500 10.500l4.500 4.500" stroke="#707070" stroke-width="2.200"/></svg>
<div class="tr" style="left:190px;top:965px;color:#333;letter-spacing:-0.4px">Search</div>
<!--/PANEL-->
<!--LTOOL-->
<div class="abs" style="left:6px;top:351px;width:15px;height:2px;background:repeating-linear-gradient(90deg,#a8a8a8 0 2px,transparent 2px 4px)"></div>
<svg class="abs" style="left:5px;top:359px" width="16" height="16" viewBox="0 0 16 16"><g opacity=".55"><path d="M1.500 5.500h9.500v9.500h-9.500z" fill="#eee" stroke="#a0a0a0"/><path d="M1.500 5.500l3.500-4h9.500l-3.500 4z" fill="#eee" stroke="#a0a0a0"/><path d="M11 5.500l3.500-4v9.500l-3.500 4z" fill="#eee" stroke="#a0a0a0"/><path d="M0 8h4M0 10h4" stroke="#a0a0a0"/></g></svg>
<svg class="abs" style="left:5px;top:381px" width="16" height="16" viewBox="0 0 16 16"><g opacity=".55"><rect x="5" y="1.500" width="9.500" height="9.500" fill="#eee" stroke="#a0a0a0"/><circle cx="5.500" cy="10.500" r="4" fill="none" stroke="#a0a0a0"/><path d="M2 10.500h7M5.500 7v7" stroke="#a0a0a0" stroke-width=".7"/></g></svg>
<div class="abs" style="left:3px;top:402px;width:20px;height:1px;background:#c8c8c8"></div>
<svg class="abs" style="left:5px;top:412px" width="16" height="16" viewBox="0 0 16 16"><g opacity=".55"><rect x="5" y="1.500" width="9.500" height="9.500" fill="#e8e8e8" stroke="#a0a0a0"/><circle cx="5.500" cy="10.500" r="4" fill="none" stroke="#a0a0a0"/></g></svg>
<svg class="abs" style="left:5px;top:434px" width="16" height="16" viewBox="0 0 16 16"><g opacity=".55"><rect x="5" y="1.500" width="9.500" height="9.500" fill="#d8d8d8" stroke="#a0a0a0"/><circle cx="5.500" cy="10.500" r="4" fill="none" stroke="#a0a0a0"/><path d="M2 10.500h7" stroke="#a0a0a0" stroke-width=".7"/></g></svg>
<svg class="abs" style="left:5px;top:456px" width="16" height="16" viewBox="0 0 16 16"><g opacity=".55"><rect x="5" y="1.500" width="9.500" height="9.500" fill="#f8f8f8" stroke="#b0b0b0" stroke-dasharray="1 1"/><circle cx="5.500" cy="10.500" r="4" fill="none" stroke="#a0a0a0"/></g></svg>
<div class="abs" style="left:6px;top:478px;border:3.500px solid transparent;border-right:4px solid #606060;border-left:none;width:0;height:0"></div>
<div class="abs" style="left:6px;top:492px;width:15px;height:2px;background:repeating-linear-gradient(90deg,#a8a8a8 0 2px,transparent 2px 4px)"></div>
<svg class="abs" style="left:5px;top:502px" width="16" height="16" viewBox="0 0 16 16"><path d="M1.500 5.500h9.500v9.500h-9.500z" fill="#3d7cc9" stroke="#3a6ea8"/><path d="M1.500 5.500l3.500-4h9.500l-3.500 4z" fill="#fff" stroke="#3a6ea8"/><path d="M11 5.500l3.500-4v9.500l-3.500 4z" fill="#fff" stroke="#3a6ea8"/></svg>
<svg class="abs" style="left:5px;top:524px" width="16" height="16" viewBox="0 0 16 16"><path d="M1.500 5.500h9.500v9.500h-9.500z" fill="#fff" stroke="#3a6ea8"/><path d="M1.500 5.500l3.500-4h9.500l-3.500 4z" fill="#3d7cc9" stroke="#3a6ea8"/><path d="M11 5.500l3.500-4v9.500l-3.500 4z" fill="#fff" stroke="#3a6ea8"/></svg>
<svg class="abs" style="left:5px;top:546px" width="16" height="16" viewBox="0 0 16 16"><path d="M1.500 5.500h9.500v9.500h-9.500z" fill="#fff" stroke="#3a6ea8"/><path d="M1.500 5.500l3.500-4h9.500l-3.500 4z" fill="#fff" stroke="#3a6ea8"/><path d="M11 5.500l3.500-4v9.500l-3.500 4z" fill="#fff" stroke="#3a6ea8"/><path d="M1.500 5.500l3.500-4v9.500l-3.500 4z" fill="#3d7cc9" stroke="#3a6ea8"/></svg>
<svg class="abs" style="left:5px;top:568px" width="16" height="16" viewBox="0 0 16 16"><path d="M1.500 5.500h9.500v9.500h-9.500z" fill="#fff" stroke="#3a6ea8"/><path d="M1.500 5.500l3.500-4h9.500l-3.500 4z" fill="#fff" stroke="#3a6ea8"/><path d="M11 5.500l3.500-4v9.500l-3.500 4z" fill="#3d7cc9" stroke="#3a6ea8"/></svg>
<svg class="abs" style="left:5px;top:590px" width="16" height="16" viewBox="0 0 16 16"><path d="M1.500 5.500h9.500v9.500h-9.500z" fill="#fff" stroke="#3a6ea8"/><path d="M1.500 5.500l3.500-4h9.500l-3.500 4z" fill="#fff" stroke="#3a6ea8"/><path d="M11 5.500l3.500-4v9.500l-3.500 4z" fill="#fff" stroke="#3a6ea8"/><rect x="5" y="1.500" width="9.500" height="9.500" fill="#3d7cc9" stroke="#3a6ea8"/><path d="M1.500 5.500h9.500v9.500h-9.500z" fill="none" stroke="#3a6ea8"/></svg>
<svg class="abs" style="left:5px;top:612px" width="16" height="16" viewBox="0 0 16 16"><path d="M1.500 5.500h9.500v9.500h-9.500z" fill="#fff" stroke="#3a6ea8"/><path d="M1.500 5.500l3.500-4h9.500l-3.500 4z" fill="#fff" stroke="#3a6ea8"/><path d="M11 5.500l3.500-4v9.500l-3.500 4z" fill="#fff" stroke="#3a6ea8"/><path d="M1.500 15l3.500-4h9.500l-3.500 4z" fill="#3d7cc9" stroke="#3a6ea8"/></svg>
<svg class="abs" style="left:5px;top:634px" width="16" height="16" viewBox="0 0 16 16"><path d="M1.500 5.500h9.500v9.500h-9.500z" fill="#3d7cc9" stroke="#3a6ea8"/><path d="M1.500 5.500l3.500-4h9.500l-3.500 4z" fill="#fff" stroke="#3a6ea8"/><path d="M11 5.500l3.500-4v9.500l-3.500 4z" fill="#3d7cc9" stroke="#3a6ea8"/></svg>
<svg class="abs" style="left:5px;top:656px" width="16" height="16" viewBox="0 0 16 16"><path d="M1.500 5.500h9.500v9.500h-9.500z" fill="#fff" stroke="#3a6ea8"/><path d="M1.500 5.500l3.500-4h9.500l-3.500 4z" fill="#fff" stroke="#3a6ea8"/><path d="M11 5.500l3.500-4v9.500l-3.500 4z" fill="#fff" stroke="#3a6ea8"/><g transform="translate(5.5 1) scale(.62)"><path d="M1.500 5.500h9.500v9.500h-9.500z" fill="#3d7cc9" stroke="#2a5a98"/><path d="M1.500 5.500l3.500-4h9.500l-3.500 4z" fill="#3d7cc9" stroke="#2a5a98"/><path d="M11 5.500l3.500-4v9.500l-3.500 4z" fill="#3d7cc9" stroke="#2a5a98"/></g></svg>
<svg class="abs" style="left:5px;top:678px" width="16" height="16" viewBox="0 0 16 16"><path d="M1.500 5.500h9.500v9.500h-9.500z" fill="#fff" stroke="#3a6ea8"/><path d="M1.500 5.500l3.500-4h9.500l-3.500 4z" fill="#fff" stroke="#3a6ea8"/><path d="M11 5.500l3.500-4v9.500l-3.500 4z" fill="#fff" stroke="#3a6ea8"/><g transform="translate(5.5 6) scale(.62)"><path d="M1.500 5.500h9.500v9.500h-9.500z" fill="#3d7cc9" stroke="#2a5a98"/><path d="M1.500 5.500l3.500-4h9.500l-3.500 4z" fill="#3d7cc9" stroke="#2a5a98"/><path d="M11 5.500l3.500-4v9.500l-3.500 4z" fill="#3d7cc9" stroke="#2a5a98"/></g></svg>
<svg class="abs" style="left:5px;top:700px" width="16" height="16" viewBox="0 0 16 16"><path d="M1.500 5.500h9.500v9.500h-9.500z" fill="#fff" stroke="#3a6ea8"/><path d="M1.500 5.500l3.500-4h9.500l-3.500 4z" fill="#fff" stroke="#3a6ea8"/><path d="M11 5.500l3.500-4v9.500l-3.500 4z" fill="#fff" stroke="#3a6ea8"/><g transform="translate(1 6) scale(.62)"><path d="M1.500 5.500h9.500v9.500h-9.500z" fill="#3d7cc9" stroke="#2a5a98"/><path d="M1.500 5.500l3.500-4h9.500l-3.500 4z" fill="#3d7cc9" stroke="#2a5a98"/><path d="M11 5.500l3.500-4v9.500l-3.500 4z" fill="#3d7cc9" stroke="#2a5a98"/></g></svg>
<div class="abs" style="left:6px;top:722px;border:3.500px solid transparent;border-right:4px solid #606060;border-left:none;width:0;height:0"></div>
<div class="abs" style="left:6px;top:736px;width:15px;height:2px;background:repeating-linear-gradient(90deg,#a8a8a8 0 2px,transparent 2px 4px)"></div>
<svg class="abs" style="left:5px;top:744px" width="16" height="16" viewBox="0 0 16 16"><path d="M3 4l10 9" stroke="#101010" stroke-width="1.300"/><path d="M3 4l3.500 1-2 2.500zM13 13l-3.500-1 2-2.500z" fill="#101010"/><path d="M1 6l4-4.500M11 15.500l4-4.500" stroke="#101010" stroke-width=".9"/></svg>
<svg class="abs" style="left:5px;top:766px" width="16" height="16" viewBox="0 0 16 16"><path d="M1 2v8M15 2v8M1.500 5h13" stroke="#e03030" stroke-width="1.200" fill="none"/><ellipse cx="9" cy="12.500" rx="3.500" ry="2.200" fill="#3878d0"/><circle cx="9" cy="12.500" r="1" fill="#fff"/></svg>
<svg class="abs" style="left:5px;top:788px" width="16" height="16" viewBox="0 0 16 16"><path d="M1 1h6M1 15h6M4 1.500v13" stroke="#e03030" stroke-width="1.200" fill="none"/><rect x="1.500" y="1.500" width="5" height="13" fill="none" stroke="#e03030" stroke-width=".7"/><ellipse cx="12" cy="8" rx="3.500" ry="2.200" fill="#3878d0"/><circle cx="12" cy="8" r="1" fill="#fff"/></svg>
<svg class="abs" style="left:5px;top:810px" width="16" height="16" viewBox="0 0 16 16"><path d="M1 14h14M1 14L10 2" fill="none" stroke="#202020" stroke-width="1.100"/><path d="M8 4.500c3 2 5.500 5 5.500 9.500" fill="none" stroke="#202020" stroke-width=".8"/><circle cx="13.500" cy="14" r="1.200" fill="#202020"/></svg>
<svg class="abs" style="left:5px;top:832px" width="16" height="16" viewBox="0 0 16 16"><circle cx="8" cy="8" r="6.500" fill="#fff" stroke="#303030"/><path d="M8 8L4 4" stroke="#303030"/><path d="M3.500 3.500l2.500.800-1.700 1.700z" fill="#303030"/></svg>
<svg class="abs" style="left:5px;top:854px" width="16" height="16" viewBox="0 0 16 16"><circle cx="8" cy="8" r="6.500" fill="#fff" stroke="#303030"/><path d="M3.500 3.500l9 9" stroke="#303030"/><path d="M3.500 3.500l2.500.800-1.700 1.700zM12.500 12.500l-2.500-.800 1.700-1.700z" fill="#303030"/></svg>
<div class="abs" style="left:3px;top:879px;width:20px;height:1px;background:#c8c8c8"></div>
<svg class="abs" style="left:5px;top:884px" width="16" height="16" viewBox="0 0 16 16"><text x="9" y="9" font-family="Liberation Sans,sans-serif" font-weight="700" font-size="10" fill="#101010">A</text><path d="M9 5H6L2.500 13" fill="none" stroke="#303030" stroke-dasharray="1.500 1"/><circle cx="2" cy="14" r="1.200" fill="#303030"/></svg>
<svg class="abs" style="left:5px;top:906px" width="16" height="16" viewBox="0 0 16 16"><rect x="4.500" y="1" width="7" height="14" fill="#c8c8c8" stroke="#b0b0b0"/><path d="M4.500 4.500h7M4.500 8h7M4.500 11.500h7M8 1v14" stroke="#b0b0b0" stroke-width=".7"/></svg>
<div class="abs" style="left:6px;top:928px;border:3.500px solid transparent;border-right:4px solid #606060;border-left:none;width:0;height:0"></div>
<!--/LTOOL-->

<!-- ============ VIEWPORT ============ -->
<div id="view">
<!--MODEL-->
<svg class="abs" style="left:0;top:0" width="1594" height="802" viewBox="326 183 1594 802">
<defs>
<linearGradient id="bg" x1="0" y1="183" x2="0" y2="985" gradientUnits="userSpaceOnUse">
<stop offset="0" stop-color="#d2d2d2"/><stop offset="0.3" stop-color="#dadada"/><stop offset="0.6" stop-color="#e4e4e4"/><stop offset="0.85" stop-color="#ececec"/><stop offset="1" stop-color="#efefef"/></linearGradient>
<radialGradient id="glow" cx="1500" cy="470" r="160" gradientUnits="userSpaceOnUse">
<stop offset="0" stop-color="#ffffff" stop-opacity="0.15"/><stop offset="1" stop-color="#ffffff" stop-opacity="0"/></radialGradient>
<linearGradient id="rim" x1="0" y1="213" x2="0" y2="930" gradientUnits="userSpaceOnUse">
<stop offset="0" stop-color="#501326"/><stop offset="0.11" stop-color="#541428"/><stop offset="0.19" stop-color="#6e243c"/><stop offset="0.255" stop-color="#a9546f"/><stop offset="0.30" stop-color="#c76c86"/><stop offset="0.35" stop-color="#bb5a77"/><stop offset="0.42" stop-color="#9c2f4f"/><stop offset="0.48" stop-color="#8b1a3a"/><stop offset="0.8" stop-color="#881838"/><stop offset="1" stop-color="#7c1735"/></linearGradient>
<linearGradient id="holeL" x1="973.4" y1="383.5" x2="941.0" y2="524.9" gradientUnits="userSpaceOnUse">
<stop offset="0" stop-color="#711932"/><stop offset="0.10" stop-color="#771c35"/><stop offset="0.22" stop-color="#a64f69"/><stop offset="0.33" stop-color="#e88aa2"/><stop offset="0.41" stop-color="#f495ab"/><stop offset="0.50" stop-color="#dc7c96"/><stop offset="0.60" stop-color="#9a3f5a"/><stop offset="0.68" stop-color="#6c1a31"/><stop offset="0.80" stop-color="#5f1529"/><stop offset="1" stop-color="#5a1428"/></linearGradient>
<linearGradient id="holeR" x1="1393.8" y1="512.7" x2="1343.4" y2="675" gradientUnits="userSpaceOnUse">
<stop offset="0" stop-color="#711932"/><stop offset="0.088" stop-color="#741a34"/><stop offset="0.176" stop-color="#8a2d48"/><stop offset="0.265" stop-color="#d0708a"/><stop offset="0.353" stop-color="#f495ab"/><stop offset="0.424" stop-color="#e07f99"/><stop offset="0.5" stop-color="#a04560"/><stop offset="0.559" stop-color="#6c1a31"/><stop offset="0.647" stop-color="#5e1529"/><stop offset="1" stop-color="#5a1428"/></linearGradient>
<linearGradient id="lobe" x1="800" y1="517" x2="829" y2="449" gradientUnits="userSpaceOnUse">
<stop offset="0" stop-color="#4e1123"/><stop offset="0.18" stop-color="#5b1428"/><stop offset="0.5" stop-color="#68172e"/><stop offset="1" stop-color="#711932"/></linearGradient>
<linearGradient id="lobeao" x1="900" y1="550" x2="880" y2="620" gradientUnits="userSpaceOnUse">
<stop offset="0" stop-color="#5e1529"/><stop offset="0.5" stop-color="#69172e"/><stop offset="1" stop-color="#711932"/></linearGradient>
<linearGradient id="r8" x1="1230" y1="674" x2="1281" y2="512" gradientUnits="userSpaceOnUse">
<stop offset="0" stop-color="#4e1122"/><stop offset="0.1" stop-color="#561326"/><stop offset="0.25" stop-color="#62152b"/><stop offset="0.5" stop-color="#6a172f"/><stop offset="0.8" stop-color="#6f1931"/><stop offset="1" stop-color="#711932"/></linearGradient>
<linearGradient id="ring" x1="0" y1="345" x2="0" y2="430" gradientUnits="userSpaceOnUse">
<stop offset="0" stop-color="#711932"/><stop offset="0.5" stop-color="#7d1a36"/><stop offset="1" stop-color="#8a1839"/></linearGradient>
<linearGradient id="pocket" x1="1290" y1="694" x2="1264" y2="776" gradientUnits="userSpaceOnUse">
<stop offset="0" stop-color="#601429" stop-opacity="1"/><stop offset="0.35" stop-color="#64162b" stop-opacity="0.8"/><stop offset="0.7" stop-color="#6a172e" stop-opacity="0.4"/><stop offset="1" stop-color="#711932" stop-opacity="0"/></linearGradient>
<linearGradient id="ltg" x1="790" y1="0" x2="985" y2="0" gradientUnits="userSpaceOnUse">
<stop offset="0" stop-color="#a04462" stop-opacity="0"/><stop offset="0.3" stop-color="#a84a68" stop-opacity="0.55"/><stop offset="0.75" stop-color="#cc6a88" stop-opacity="0.85"/><stop offset="1" stop-color="#d87892" stop-opacity="0.95"/></linearGradient>
<linearGradient id="ltd" x1="800" y1="0" x2="900" y2="0" gradientUnits="userSpaceOnUse">
<stop offset="0" stop-color="#541327" stop-opacity="0"/><stop offset="1" stop-color="#541327" stop-opacity="0.8"/></linearGradient>
<filter id="b40" x="-30%" y="-30%" width="160%" height="160%"><feGaussianBlur stdDeviation="16"/></filter>
<filter id="b20" x="-30%" y="-30%" width="160%" height="160%"><feGaussianBlur stdDeviation="11"/></filter>
<filter id="b8" x="-30%" y="-30%" width="160%" height="160%"><feGaussianBlur stdDeviation="6"/></filter>
<filter id="b3" x="-60%" y="-30%" width="220%" height="160%"><feGaussianBlur stdDeviation="3.2"/></filter>
<filter id="b1" x="-10%" y="-10%" width="120%" height="120%"><feGaussianBlur stdDeviation="1.0"/></filter>
</defs>
<rect x="326" y="183" width="1594" height="802" fill="url(#bg)"/>
<rect x="326" y="183" width="1594" height="802" fill="url(#glow)"/>
<g id="shadow">
<path d="M615 850 L815 786 L885 803 L995 868 L995 895 L920 876 L817 912 Z" fill="#000" opacity="0.5" filter="url(#b40)"/>
<path d="M652 849 L817 799 L880 813 L990 872 L990 891 L922 868 L817 902 Z" fill="#000" filter="url(#b20)"/>
<path d="M740 872 L817 880 L880 862 L817 898 Z" fill="#000" filter="url(#b8)"/>
<path d="M800 893 L852 897 L966 943 L1049 990 L967 990 L878 948 L790 912 Z" fill="#000" opacity="0.45" filter="url(#b20)"/>
<path d="M1105 915 L1185 918 L1340 968 L1375 995 L1159 1000 L1133 960 Z" fill="#000" opacity="0.4" filter="url(#b40)"/>
<path d="M1130 928 L1195 928 L1325 973 L1340 995 L1175 995 L1145 957 Z" fill="#000" filter="url(#b20)"/>
</g>
<path d="M825.0 527.0 C819.2 524.7 800.0 517.0 790.0 513.0 C780.0 509.0 773.0 506.2 765.0 503.0 C757.0 499.8 748.3 497.0 742.0 494.0 C735.7 491.0 731.3 488.7 727.0 485.0 C722.7 481.3 718.8 477.0 716.0 472.0 C713.2 467.0 711.2 461.2 710.0 455.0 C708.8 448.8 708.7 441.2 709.0 435.0 C709.3 428.8 710.7 423.5 712.0 418.0 C713.3 412.5 714.8 407.7 717.0 402.0 C719.2 396.3 721.5 391.0 725.0 384.0 C728.5 377.0 733.0 368.0 738.0 360.0 C743.0 352.0 746.3 346.2 755.0 336.0 C763.7 325.8 777.5 310.5 790.0 299.0 C802.5 287.5 815.0 275.8 830.0 267.0 C845.0 258.2 863.3 251.2 880.0 246.0 C896.7 240.8 913.3 238.3 930.0 236.0 C946.7 233.7 965.8 232.2 980.0 232.0 C994.2 231.8 1009.2 234.5 1015.0 235.0 C1019.2 233.8 1029.2 230.5 1040.0 228.0 C1050.8 225.5 1065.0 222.5 1080.0 220.0 C1095.0 217.5 1115.5 214.0 1130.0 213.0 C1144.5 212.0 1154.5 212.8 1167.0 214.0 C1179.5 215.2 1192.5 217.0 1205.0 220.0 C1217.5 223.0 1229.5 227.0 1242.0 232.0 C1254.5 237.0 1267.5 243.3 1280.0 250.0 C1292.5 256.7 1305.5 264.5 1317.0 272.0 C1328.5 279.5 1340.2 287.8 1349.0 295.0 C1357.8 302.2 1364.3 309.0 1370.0 315.0 C1375.7 321.0 1377.0 323.3 1383.0 331.0 C1389.0 338.7 1399.5 351.2 1406.0 361.0 C1412.5 370.8 1417.3 381.7 1422.0 390.0 C1426.7 398.3 1430.0 403.0 1434.0 411.0 C1438.0 419.0 1442.3 428.8 1446.0 438.0 C1449.7 447.2 1453.5 458.7 1456.0 466.0 C1458.5 473.3 1459.3 476.8 1461.0 482.0 C1462.7 487.2 1464.5 491.5 1466.0 497.0 C1467.5 502.5 1468.5 505.8 1470.0 515.0 C1471.5 524.2 1474.0 539.5 1475.0 552.0 C1476.0 564.5 1476.0 577.8 1476.0 590.0 C1476.0 602.2 1475.7 613.8 1475.0 625.0 C1474.3 636.2 1473.5 646.2 1472.0 657.0 C1470.5 667.8 1469.2 678.5 1466.0 690.0 C1462.8 701.5 1456.8 716.3 1453.0 726.0 C1449.2 735.7 1446.8 740.7 1443.0 748.0 C1439.2 755.3 1434.3 762.7 1430.0 770.0 C1425.7 777.3 1421.8 784.8 1417.0 792.0 C1412.2 799.2 1409.3 803.8 1401.0 813.0 C1392.7 822.2 1379.5 836.0 1367.0 847.0 C1354.5 858.0 1340.0 869.8 1326.0 879.0 C1312.0 888.2 1297.3 895.3 1283.0 902.0 C1268.7 908.7 1253.0 915.0 1240.0 919.0 C1227.0 923.0 1215.8 924.3 1205.0 926.0 C1194.2 927.7 1187.5 928.8 1175.0 929.0 C1162.5 929.2 1144.2 928.8 1130.0 927.0 C1115.8 925.2 1102.5 921.3 1090.0 918.0 C1077.5 914.7 1066.7 911.7 1055.0 907.0 C1043.3 902.3 1030.5 896.2 1020.0 890.0 C1009.5 883.8 1001.2 877.3 992.0 870.0 C982.8 862.7 973.3 854.3 965.0 846.0 C956.7 837.7 949.5 828.5 942.0 820.0 C934.5 811.5 927.0 803.3 920.0 795.0 C913.0 786.7 906.0 778.3 900.0 770.0 C894.0 761.7 889.0 754.7 884.0 745.0 C879.0 735.3 874.7 724.8 870.0 712.0 C865.3 699.2 860.2 682.5 856.0 668.0 C851.8 653.5 848.3 639.7 845.0 625.0 C841.7 610.3 838.7 593.3 836.0 580.0 C833.3 566.7 830.8 553.8 829.0 545.0 C827.2 536.2 825.7 530.0 825.0 527.0Z" fill="url(#rim)"/>
<path d="M1017.0 236.0 C1026.7 237.7 1056.2 238.7 1075.0 246.0 C1093.8 253.3 1116.7 271.0 1130.0 280.0 C1143.3 289.0 1145.7 291.7 1155.0 300.0 C1164.3 308.3 1174.8 318.7 1186.0 330.0 C1197.2 341.3 1211.0 355.5 1222.0 368.0 C1233.0 380.5 1243.2 393.0 1252.0 405.0 C1260.8 417.0 1268.3 428.3 1275.0 440.0 C1281.7 451.7 1286.8 463.3 1292.0 475.0 C1297.2 486.7 1302.0 498.3 1306.0 510.0 C1310.0 521.7 1313.0 532.5 1316.0 545.0 C1319.0 557.5 1321.7 572.5 1324.0 585.0 C1326.3 597.5 1329.0 614.2 1330.0 620.0 C1331.2 624.2 1333.7 637.7 1337.0 645.0 C1340.3 652.3 1345.2 658.8 1350.0 664.0 C1354.8 669.2 1361.2 673.5 1366.0 676.0 C1370.8 678.5 1374.8 679.3 1379.0 679.0 C1383.2 678.7 1386.8 676.5 1391.0 674.0 C1395.2 671.5 1399.7 668.8 1404.0 664.0 C1408.3 659.2 1413.3 651.5 1417.0 645.0 C1420.7 638.5 1424.5 628.3 1426.0 625.0 C1426.8 620.8 1429.8 608.5 1431.0 600.0 C1432.2 591.5 1432.9 582.2 1433.5 574.0 C1434.1 565.8 1434.9 559.2 1434.5 551.0 C1434.1 542.8 1432.6 533.0 1431.0 525.0 C1429.4 517.0 1427.2 510.5 1425.0 503.0 C1422.8 495.5 1420.0 486.2 1418.0 480.0 C1416.0 473.8 1415.5 473.0 1413.0 466.0 C1410.5 459.0 1407.0 447.5 1403.0 438.0 C1399.0 428.5 1393.5 416.8 1389.0 409.0 C1384.5 401.2 1381.2 398.2 1376.0 391.0 C1370.8 383.8 1364.3 374.5 1358.0 366.0 C1351.7 357.5 1344.5 348.0 1338.0 340.0 C1331.5 332.0 1325.3 324.8 1319.0 318.0 C1312.7 311.2 1306.2 304.7 1300.0 299.0 C1293.8 293.3 1289.0 289.5 1282.0 284.0 C1275.0 278.5 1266.8 272.0 1258.0 266.0 C1249.2 260.0 1238.7 252.7 1229.0 248.0 C1219.3 243.3 1210.3 241.3 1200.0 238.0 C1189.7 234.7 1178.7 230.7 1167.0 228.0 C1155.3 225.3 1141.2 223.0 1130.0 222.0 C1118.8 221.0 1111.7 221.0 1100.0 222.0 C1088.3 223.0 1073.8 225.7 1060.0 228.0 C1046.2 230.3 1024.2 234.7 1017.0 236.0Z" fill="#711932"/>
<path d="M1426.0 625.0 C1426.8 620.8 1429.8 608.5 1431.0 600.0 C1432.2 591.5 1432.9 582.2 1433.5 574.0 C1434.1 565.8 1434.9 559.2 1434.5 551.0 C1434.1 542.8 1432.6 533.0 1431.0 525.0 C1429.4 517.0 1427.2 510.5 1425.0 503.0 C1422.8 495.5 1420.0 486.2 1418.0 480.0 C1416.0 473.8 1415.5 473.0 1413.0 466.0 C1410.5 459.0 1407.0 447.5 1403.0 438.0 C1399.0 428.5 1393.5 416.8 1389.0 409.0 C1384.5 401.2 1381.2 398.2 1376.0 391.0 C1370.8 383.8 1364.3 374.5 1358.0 366.0 C1351.7 357.5 1344.5 348.0 1338.0 340.0 C1331.5 332.0 1325.3 324.8 1319.0 318.0 C1312.7 311.2 1306.2 304.7 1300.0 299.0 C1293.8 293.3 1289.0 289.5 1282.0 284.0 C1275.0 278.5 1266.8 272.0 1258.0 266.0 C1249.2 260.0 1238.7 252.7 1229.0 248.0 C1219.3 243.3 1210.3 241.3 1200.0 238.0 C1189.7 234.7 1178.7 230.7 1167.0 228.0 C1155.3 225.3 1141.2 223.0 1130.0 222.0 C1118.8 221.0 1111.7 221.0 1100.0 222.0 C1088.3 223.0 1073.8 225.7 1060.0 228.0 C1046.2 230.3 1024.2 234.7 1017.0 236.0" fill="none" stroke="#c86a84" stroke-width="2.4" opacity="0.9" filter="url(#b1)"/>
<path d="M825.0 527.0 C819.2 524.7 800.0 517.0 790.0 513.0 C780.0 509.0 773.0 506.2 765.0 503.0 C757.0 499.8 748.3 497.0 742.0 494.0 C735.7 491.0 731.3 488.7 727.0 485.0 C722.7 481.3 718.8 477.0 716.0 472.0 C713.2 467.0 711.2 461.2 710.0 455.0 C708.8 448.8 708.7 441.2 709.0 435.0 C709.3 428.8 710.7 423.5 712.0 418.0 C713.3 412.5 714.8 407.7 717.0 402.0 C719.2 396.3 721.5 391.0 725.0 384.0 C728.5 377.0 733.0 368.0 738.0 360.0 C743.0 352.0 746.3 346.2 755.0 336.0 C763.7 325.8 777.5 310.5 790.0 299.0 C802.5 287.5 815.0 275.8 830.0 267.0 C845.0 258.2 863.3 251.2 880.0 246.0 C896.7 240.8 913.3 238.3 930.0 236.0 C946.7 233.7 968.3 231.3 980.0 232.0 C991.7 232.7 996.7 238.7 1000.0 240.0 C1008.3 242.0 1035.0 247.0 1050.0 252.0 C1065.0 257.0 1076.7 262.2 1090.0 270.0 C1103.3 277.8 1118.2 289.0 1130.0 299.0 C1141.8 309.0 1149.3 318.7 1161.0 330.0 C1172.7 341.3 1188.2 354.5 1200.0 367.0 C1211.8 379.5 1222.8 392.8 1232.0 405.0 C1241.2 417.2 1247.8 427.5 1255.0 440.0 C1262.2 452.5 1269.2 466.7 1275.0 480.0 C1280.8 493.3 1285.8 507.5 1290.0 520.0 C1294.2 532.5 1297.2 543.3 1300.0 555.0 C1302.8 566.7 1305.2 579.2 1307.0 590.0 C1308.8 600.8 1309.5 610.8 1311.0 620.0 C1312.5 629.2 1313.7 636.7 1316.0 645.0 C1318.3 653.3 1321.0 661.7 1325.0 670.0 C1329.0 678.3 1335.8 689.2 1340.0 695.0 C1344.2 700.8 1346.7 702.5 1350.0 705.0 C1353.3 707.5 1356.7 709.2 1360.0 710.0 C1363.3 710.8 1366.7 710.7 1370.0 710.0 C1373.3 709.3 1376.5 706.8 1380.0 706.0 C1383.5 705.2 1387.5 704.8 1391.0 705.0 C1394.5 705.2 1397.8 705.0 1401.0 707.0 C1404.2 709.0 1407.8 712.8 1410.0 717.0 C1412.2 721.2 1413.5 726.5 1414.0 732.0 C1414.5 737.5 1413.8 744.3 1413.0 750.0 C1412.2 755.7 1412.0 759.3 1409.0 766.0 C1406.0 772.7 1400.7 781.3 1395.0 790.0 C1389.3 798.7 1382.7 808.5 1375.0 818.0 C1367.3 827.5 1358.0 838.3 1349.0 847.0 C1340.0 855.7 1329.5 863.7 1321.0 870.0 C1312.5 876.3 1306.2 880.2 1298.0 885.0 C1289.8 889.8 1280.8 894.2 1272.0 899.0 C1263.2 903.8 1249.5 911.5 1245.0 914.0 C1244.2 914.8 1246.7 917.0 1240.0 919.0 C1233.3 921.0 1215.8 924.3 1205.0 926.0 C1194.2 927.7 1187.5 928.8 1175.0 929.0 C1162.5 929.2 1144.2 928.8 1130.0 927.0 C1115.8 925.2 1102.5 921.3 1090.0 918.0 C1077.5 914.7 1066.7 911.7 1055.0 907.0 C1043.3 902.3 1030.5 896.2 1020.0 890.0 C1009.5 883.8 1001.2 877.3 992.0 870.0 C982.8 862.7 973.3 854.3 965.0 846.0 C956.7 837.7 949.5 828.5 942.0 820.0 C934.5 811.5 927.0 803.3 920.0 795.0 C913.0 786.7 906.0 778.3 900.0 770.0 C894.0 761.7 889.0 754.7 884.0 745.0 C879.0 735.3 874.7 724.8 870.0 712.0 C865.3 699.2 860.2 682.5 856.0 668.0 C851.8 653.5 848.3 639.7 845.0 625.0 C841.7 610.3 838.7 593.3 836.0 580.0 C833.3 566.7 830.8 553.8 829.0 545.0 C827.2 536.2 825.7 530.0 825.0 527.0Z" fill="#711932"/>
<clipPath id="cface"><path d="M825.0 527.0 C819.2 524.7 800.0 517.0 790.0 513.0 C780.0 509.0 773.0 506.2 765.0 503.0 C757.0 499.8 748.3 497.0 742.0 494.0 C735.7 491.0 731.3 488.7 727.0 485.0 C722.7 481.3 718.8 477.0 716.0 472.0 C713.2 467.0 711.2 461.2 710.0 455.0 C708.8 448.8 708.7 441.2 709.0 435.0 C709.3 428.8 710.7 423.5 712.0 418.0 C713.3 412.5 714.8 407.7 717.0 402.0 C719.2 396.3 721.5 391.0 725.0 384.0 C728.5 377.0 733.0 368.0 738.0 360.0 C743.0 352.0 746.3 346.2 755.0 336.0 C763.7 325.8 777.5 310.5 790.0 299.0 C802.5 287.5 815.0 275.8 830.0 267.0 C845.0 258.2 863.3 251.2 880.0 246.0 C896.7 240.8 913.3 238.3 930.0 236.0 C946.7 233.7 968.3 231.3 980.0 232.0 C991.7 232.7 996.7 238.7 1000.0 240.0 C1008.3 242.0 1035.0 247.0 1050.0 252.0 C1065.0 257.0 1076.7 262.2 1090.0 270.0 C1103.3 277.8 1118.2 289.0 1130.0 299.0 C1141.8 309.0 1149.3 318.7 1161.0 330.0 C1172.7 341.3 1188.2 354.5 1200.0 367.0 C1211.8 379.5 1222.8 392.8 1232.0 405.0 C1241.2 417.2 1247.8 427.5 1255.0 440.0 C1262.2 452.5 1269.2 466.7 1275.0 480.0 C1280.8 493.3 1285.8 507.5 1290.0 520.0 C1294.2 532.5 1297.2 543.3 1300.0 555.0 C1302.8 566.7 1305.2 579.2 1307.0 590.0 C1308.8 600.8 1309.5 610.8 1311.0 620.0 C1312.5 629.2 1313.7 636.7 1316.0 645.0 C1318.3 653.3 1321.0 661.7 1325.0 670.0 C1329.0 678.3 1335.8 689.2 1340.0 695.0 C1344.2 700.8 1346.7 702.5 1350.0 705.0 C1353.3 707.5 1356.7 709.2 1360.0 710.0 C1363.3 710.8 1366.7 710.7 1370.0 710.0 C1373.3 709.3 1376.5 706.8 1380.0 706.0 C1383.5 705.2 1387.5 704.8 1391.0 705.0 C1394.5 705.2 1397.8 705.0 1401.0 707.0 C1404.2 709.0 1407.8 712.8 1410.0 717.0 C1412.2 721.2 1413.5 726.5 1414.0 732.0 C1414.5 737.5 1413.8 744.3 1413.0 750.0 C1412.2 755.7 1412.0 759.3 1409.0 766.0 C1406.0 772.7 1400.7 781.3 1395.0 790.0 C1389.3 798.7 1382.7 808.5 1375.0 818.0 C1367.3 827.5 1358.0 838.3 1349.0 847.0 C1340.0 855.7 1329.5 863.7 1321.0 870.0 C1312.5 876.3 1306.2 880.2 1298.0 885.0 C1289.8 889.8 1280.8 894.2 1272.0 899.0 C1263.2 903.8 1249.5 911.5 1245.0 914.0 C1244.2 914.8 1246.7 917.0 1240.0 919.0 C1233.3 921.0 1215.8 924.3 1205.0 926.0 C1194.2 927.7 1187.5 928.8 1175.0 929.0 C1162.5 929.2 1144.2 928.8 1130.0 927.0 C1115.8 925.2 1102.5 921.3 1090.0 918.0 C1077.5 914.7 1066.7 911.7 1055.0 907.0 C1043.3 902.3 1030.5 896.2 1020.0 890.0 C1009.5 883.8 1001.2 877.3 992.0 870.0 C982.8 862.7 973.3 854.3 965.0 846.0 C956.7 837.7 949.5 828.5 942.0 820.0 C934.5 811.5 927.0 803.3 920.0 795.0 C913.0 786.7 906.0 778.3 900.0 770.0 C894.0 761.7 889.0 754.7 884.0 745.0 C879.0 735.3 874.7 724.8 870.0 712.0 C865.3 699.2 860.2 682.5 856.0 668.0 C851.8 653.5 848.3 639.7 845.0 625.0 C841.7 610.3 838.7 593.3 836.0 580.0 C833.3 566.7 830.8 553.8 829.0 545.0 C827.2 536.2 825.7 530.0 825.0 527.0Z"/></clipPath>
<clipPath id="cbody"><path d="M825.0 527.0 C819.2 524.7 800.0 517.0 790.0 513.0 C780.0 509.0 773.0 506.2 765.0 503.0 C757.0 499.8 748.3 497.0 742.0 494.0 C735.7 491.0 731.3 488.7 727.0 485.0 C722.7 481.3 718.8 477.0 716.0 472.0 C713.2 467.0 711.2 461.2 710.0 455.0 C708.8 448.8 708.7 441.2 709.0 435.0 C709.3 428.8 710.7 423.5 712.0 418.0 C713.3 412.5 714.8 407.7 717.0 402.0 C719.2 396.3 721.5 391.0 725.0 384.0 C728.5 377.0 733.0 368.0 738.0 360.0 C743.0 352.0 746.3 346.2 755.0 336.0 C763.7 325.8 777.5 310.5 790.0 299.0 C802.5 287.5 815.0 275.8 830.0 267.0 C845.0 258.2 863.3 251.2 880.0 246.0 C896.7 240.8 913.3 238.3 930.0 236.0 C946.7 233.7 965.8 232.2 980.0 232.0 C994.2 231.8 1009.2 234.5 1015.0 235.0 C1019.2 233.8 1029.2 230.5 1040.0 228.0 C1050.8 225.5 1065.0 222.5 1080.0 220.0 C1095.0 217.5 1115.5 214.0 1130.0 213.0 C1144.5 212.0 1154.5 212.8 1167.0 214.0 C1179.5 215.2 1192.5 217.0 1205.0 220.0 C1217.5 223.0 1229.5 227.0 1242.0 232.0 C1254.5 237.0 1267.5 243.3 1280.0 250.0 C1292.5 256.7 1305.5 264.5 1317.0 272.0 C1328.5 279.5 1340.2 287.8 1349.0 295.0 C1357.8 302.2 1364.3 309.0 1370.0 315.0 C1375.7 321.0 1377.0 323.3 1383.0 331.0 C1389.0 338.7 1399.5 351.2 1406.0 361.0 C1412.5 370.8 1417.3 381.7 1422.0 390.0 C1426.7 398.3 1430.0 403.0 1434.0 411.0 C1438.0 419.0 1442.3 428.8 1446.0 438.0 C1449.7 447.2 1453.5 458.7 1456.0 466.0 C1458.5 473.3 1459.3 476.8 1461.0 482.0 C1462.7 487.2 1464.5 491.5 1466.0 497.0 C1467.5 502.5 1468.5 505.8 1470.0 515.0 C1471.5 524.2 1474.0 539.5 1475.0 552.0 C1476.0 564.5 1476.0 577.8 1476.0 590.0 C1476.0 602.2 1475.7 613.8 1475.0 625.0 C1474.3 636.2 1473.5 646.2 1472.0 657.0 C1470.5 667.8 1469.2 678.5 1466.0 690.0 C1462.8 701.5 1456.8 716.3 1453.0 726.0 C1449.2 735.7 1446.8 740.7 1443.0 748.0 C1439.2 755.3 1434.3 762.7 1430.0 770.0 C1425.7 777.3 1421.8 784.8 1417.0 792.0 C1412.2 799.2 1409.3 803.8 1401.0 813.0 C1392.7 822.2 1379.5 836.0 1367.0 847.0 C1354.5 858.0 1340.0 869.8 1326.0 879.0 C1312.0 888.2 1297.3 895.3 1283.0 902.0 C1268.7 908.7 1253.0 915.0 1240.0 919.0 C1227.0 923.0 1215.8 924.3 1205.0 926.0 C1194.2 927.7 1187.5 928.8 1175.0 929.0 C1162.5 929.2 1144.2 928.8 1130.0 927.0 C1115.8 925.2 1102.5 921.3 1090.0 918.0 C1077.5 914.7 1066.7 911.7 1055.0 907.0 C1043.3 902.3 1030.5 896.2 1020.0 890.0 C1009.5 883.8 1001.2 877.3 992.0 870.0 C982.8 862.7 973.3 854.3 965.0 846.0 C956.7 837.7 949.5 828.5 942.0 820.0 C934.5 811.5 927.0 803.3 920.0 795.0 C913.0 786.7 906.0 778.3 900.0 770.0 C894.0 761.7 889.0 754.7 884.0 745.0 C879.0 735.3 874.7 724.8 870.0 712.0 C865.3 699.2 860.2 682.5 856.0 668.0 C851.8 653.5 848.3 639.7 845.0 625.0 C841.7 610.3 838.7 593.3 836.0 580.0 C833.3 566.7 830.8 553.8 829.0 545.0 C827.2 536.2 825.7 530.0 825.0 527.0Z"/></clipPath>
<g clip-path="url(#cface)">
<path d="M690 300 L1010 220 L1010 560 L955 557 L920 559 L892 547 L855 535 L825 527 L790 513 L765 503 L742 494 L727 485 L716 472 L700 455 Z" fill="url(#lobe)"/>
<path d="M825 527 L855 535 L892 547 L920 559 L955 557 L975 562 L990 580 L995 640 L930 650 L850 640 L832 560 Z" fill="url(#lobeao)"/>
<path d="M1117.0 470.0 C1116.8 481.7 1115.7 518.7 1116.0 540.0 C1116.3 561.3 1117.7 584.5 1119.0 598.0 C1120.3 611.5 1121.2 614.7 1124.0 621.0 C1126.8 627.3 1130.0 632.0 1136.0 636.0 C1142.0 640.0 1146.0 639.7 1160.0 645.0 C1174.0 650.3 1196.7 659.8 1220.0 668.0 C1243.3 676.2 1280.8 687.8 1300.0 694.0 C1319.2 700.2 1324.7 702.2 1335.0 705.0 C1345.3 707.8 1357.5 710.0 1362.0 711.0 L1420 700 L1420 440 L1250 420 Z" fill="url(#r8)"/>
<path d="M1216.5 667 L1300 694 L1335 705 L1362 711 L1392 706 L1409 717 L1414 745 L1407 770 L1392 795 L1372 822 L1345 850 L1300 830 L1216.5 790 Z" fill="url(#pocket)" opacity="0.75"/>
<path d="M1360.0 710.0 C1361.7 710.0 1366.7 710.7 1370.0 710.0 C1373.3 709.3 1376.5 706.8 1380.0 706.0 C1383.5 705.2 1387.5 704.8 1391.0 705.0 C1394.5 705.2 1397.8 705.0 1401.0 707.0 C1404.2 709.0 1407.8 712.8 1410.0 717.0 C1412.2 721.2 1413.5 726.5 1414.0 732.0 C1414.5 737.5 1413.8 744.3 1413.0 750.0 C1412.2 755.7 1412.0 759.3 1409.0 766.0 C1406.0 772.7 1400.7 781.3 1395.0 790.0 C1389.3 798.7 1382.7 808.5 1375.0 818.0 C1367.3 827.5 1358.0 838.3 1349.0 847.0 C1340.0 855.7 1329.5 863.7 1321.0 870.0 C1312.5 876.3 1301.8 882.5 1298.0 885.0" fill="none" stroke="#561226" stroke-width="22" opacity="0.55" filter="url(#b3)"/>
<path d="M1136 636 L1160 645 L1220 668 L1300 694 L1335 705" fill="none" stroke="#4a1020" stroke-width="2" opacity="0.6" filter="url(#b1)"/>
<path d="M1216.5 667 L1216.5 688" stroke="#4a1020" stroke-width="1.4" opacity="0.8"/>
</g>
<path d="M935.0 345.0 C931.2 347.8 918.3 356.2 912.0 362.0 C905.7 367.8 901.3 372.8 897.0 380.0 C892.7 387.2 889.0 396.7 886.0 405.0 C883.0 413.3 880.7 419.7 879.0 430.0 C877.3 440.3 875.8 454.5 876.0 467.0 C876.2 479.5 878.2 495.3 880.0 505.0 C881.8 514.7 882.8 518.0 887.0 525.0 C891.2 532.0 897.8 541.5 905.0 547.0 C912.2 552.5 921.7 556.5 930.0 558.0 C938.3 559.5 947.5 555.3 955.0 556.0 C962.5 556.7 969.7 558.8 975.0 562.0 C980.3 565.2 984.2 570.3 987.0 575.0 C989.8 579.7 991.0 584.2 992.0 590.0 C993.0 595.8 993.0 603.7 993.0 610.0 C993.0 616.3 992.2 625.0 992.0 628.0 C993.7 617.8 998.7 587.5 1002.0 567.0 C1005.3 546.5 1009.0 524.5 1012.0 505.0 C1015.0 485.5 1017.5 464.0 1020.0 450.0 C1022.5 436.0 1025.5 429.3 1027.0 421.0 C1028.5 412.7 1029.8 408.2 1029.0 400.0 C1028.2 391.8 1026.8 380.3 1022.0 372.0 C1017.2 363.7 1007.8 355.3 1000.0 350.0 C992.2 344.7 985.8 340.8 975.0 340.0 C964.2 339.2 941.7 344.2 935.0 345.0 Z" fill="url(#ring)"/>
<path d="M1031 418 L1024 470 L1015 520 L1005 575 L994 632 L1000 575 L1009 520 L1017 470 L1023 440 Z" fill="none" stroke="#3f0d1c" stroke-width="8" opacity="0.6" filter="url(#b3)"/>
<path d="M1029 420 L1022 470 L1013 520 L1003 575 L994 630" fill="none" stroke="#4a1020" stroke-width="2.5" opacity="0.8" filter="url(#b1)"/>
<path d="M919.0 387.0 C915.2 394.2 910.0 402.8 907.0 411.0 C904.0 419.2 902.3 428.2 901.0 436.0 C899.7 443.8 898.8 449.8 899.0 458.0 C899.2 466.2 900.5 478.0 902.0 485.0 C903.5 492.0 905.7 495.7 908.0 500.0 C910.3 504.3 911.5 507.3 916.0 511.0 C920.5 514.7 926.8 520.5 935.0 522.0 C943.2 523.5 955.0 523.7 965.0 520.0 C975.0 516.3 986.7 507.5 995.0 500.0 C1003.3 492.5 1010.3 483.0 1015.0 475.0 C1019.7 467.0 1021.0 460.8 1023.0 452.0 C1025.0 443.2 1026.0 430.7 1027.0 422.0 C1028.0 413.3 1029.8 408.3 1029.0 400.0 C1028.2 391.7 1026.8 380.3 1022.0 372.0 C1017.2 363.7 1007.8 355.3 1000.0 350.0 C992.2 344.7 983.3 340.0 975.0 340.0 C966.7 340.0 957.5 345.3 950.0 350.0 C942.5 354.7 935.2 361.8 930.0 368.0 C924.8 374.2 922.8 379.8 919.0 387.0Z" fill="url(#holeL)"/>
<path d="M918 362 Q945 340 978 334" fill="none" stroke="#5a1428" stroke-width="2.5" opacity="0.55" filter="url(#b1)"/>
<path d="M1252.0 405.0 C1255.8 410.8 1268.3 428.3 1275.0 440.0 C1281.7 451.7 1286.8 463.3 1292.0 475.0 C1297.2 486.7 1302.0 498.3 1306.0 510.0 C1310.0 521.7 1313.0 532.5 1316.0 545.0 C1319.0 557.5 1321.7 572.5 1324.0 585.0 C1326.3 597.5 1327.8 610.0 1330.0 620.0 C1332.2 630.0 1333.7 637.7 1337.0 645.0 C1340.3 652.3 1345.2 658.8 1350.0 664.0 C1354.8 669.2 1361.2 673.5 1366.0 676.0 C1370.8 678.5 1374.8 679.3 1379.0 679.0 C1383.2 678.7 1386.8 676.5 1391.0 674.0 C1395.2 671.5 1399.7 668.8 1404.0 664.0 C1408.3 659.2 1413.3 651.5 1417.0 645.0 C1420.7 638.5 1423.7 632.5 1426.0 625.0 C1428.3 617.5 1429.8 608.5 1431.0 600.0 C1432.2 591.5 1432.9 582.2 1433.5 574.0 C1434.1 565.8 1434.9 559.2 1434.5 551.0 C1434.1 542.8 1432.6 533.0 1431.0 525.0 C1429.4 517.0 1427.2 510.5 1425.0 503.0 C1422.8 495.5 1420.0 486.2 1418.0 480.0 C1416.0 473.8 1415.5 473.0 1413.0 466.0 C1410.5 459.0 1407.0 447.5 1403.0 438.0 C1399.0 428.5 1393.5 416.8 1389.0 409.0 C1384.5 401.2 1381.2 398.2 1376.0 391.0 C1370.8 383.8 1361.0 370.2 1358.0 366.0 Z" fill="url(#holeR)"/>
<path d="M1434.5 551.0 C1433.9 546.7 1432.6 533.0 1431.0 525.0 C1429.4 517.0 1427.2 510.5 1425.0 503.0 C1422.8 495.5 1420.0 486.2 1418.0 480.0 C1416.0 473.8 1415.5 473.0 1413.0 466.0 C1410.5 459.0 1407.0 447.5 1403.0 438.0 C1399.0 428.5 1393.5 416.8 1389.0 409.0 C1384.5 401.2 1381.2 398.2 1376.0 391.0 C1370.8 383.8 1364.3 374.5 1358.0 366.0 C1351.7 357.5 1344.5 348.0 1338.0 340.0 C1331.5 332.0 1325.3 324.8 1319.0 318.0 C1312.7 311.2 1306.2 304.7 1300.0 299.0 C1293.8 293.3 1289.0 289.5 1282.0 284.0 C1275.0 278.5 1262.0 269.0 1258.0 266.0 L1258.0 266.0 C1262.0 269.0 1274.9 278.6 1282.0 284.0 C1289.1 289.4 1294.0 293.1 1300.4 298.5 C1306.8 304.0 1313.7 310.1 1320.4 316.7 C1327.2 323.2 1333.7 330.1 1340.7 337.8 C1347.7 345.5 1355.4 354.6 1362.3 362.8 C1369.1 371.0 1376.2 379.8 1381.7 386.9 C1387.1 394.0 1390.4 397.5 1395.1 405.5 C1399.7 413.6 1405.4 425.6 1409.5 435.3 C1413.5 445.0 1417.2 456.5 1419.6 463.6 C1422.0 470.8 1422.2 471.8 1423.7 478.1 C1425.2 484.5 1427.1 494.2 1428.6 502.0 C1430.0 509.7 1431.5 516.5 1432.5 524.7 C1433.5 532.9 1434.2 546.6 1434.5 551.0Z" fill="url(#rim)"/>
<path d="M1434.5 551.0 C1433.9 546.7 1432.6 533.0 1431.0 525.0 C1429.4 517.0 1427.2 510.5 1425.0 503.0 C1422.8 495.5 1420.0 486.2 1418.0 480.0 C1416.0 473.8 1415.5 473.0 1413.0 466.0 C1410.5 459.0 1407.0 447.5 1403.0 438.0 C1399.0 428.5 1393.5 416.8 1389.0 409.0 C1384.5 401.2 1381.2 398.2 1376.0 391.0 C1370.8 383.8 1364.3 374.5 1358.0 366.0 C1351.7 357.5 1344.5 348.0 1338.0 340.0 C1331.5 332.0 1325.3 324.8 1319.0 318.0 C1312.7 311.2 1306.2 304.7 1300.0 299.0 C1293.8 293.3 1289.0 289.5 1282.0 284.0 C1275.0 278.5 1262.0 269.0 1258.0 266.0 L1258.0 266.0 C1262.0 269.0 1274.9 278.6 1282.0 284.0 C1289.1 289.4 1294.0 293.1 1300.4 298.5 C1306.8 304.0 1313.7 310.1 1320.4 316.7 C1327.2 323.2 1333.7 330.1 1340.7 337.8 C1347.7 345.5 1355.4 354.6 1362.3 362.8 C1369.1 371.0 1376.2 379.8 1381.7 386.9 C1387.1 394.0 1390.4 397.5 1395.1 405.5 C1399.7 413.6 1405.4 425.6 1409.5 435.3 C1413.5 445.0 1417.2 456.5 1419.6 463.6 C1422.0 470.8 1422.2 471.8 1423.7 478.1 C1425.2 484.5 1427.1 494.2 1428.6 502.0 C1430.0 509.7 1431.5 516.5 1432.5 524.7 C1433.5 532.9 1434.2 546.6 1434.5 551.0Z" fill="#3a0a18" opacity="0.14"/>
<path d="M1403.0 438.0 C1400.7 433.2 1393.5 416.8 1389.0 409.0 C1384.5 401.2 1381.2 398.2 1376.0 391.0 C1370.8 383.8 1364.3 374.5 1358.0 366.0 C1351.7 357.5 1344.5 348.0 1338.0 340.0 C1331.5 332.0 1325.3 324.8 1319.0 318.0 C1312.7 311.2 1306.2 304.7 1300.0 299.0 C1293.8 293.3 1289.0 289.5 1282.0 284.0 C1275.0 278.5 1266.8 272.0 1258.0 266.0 C1249.2 260.0 1238.7 252.7 1229.0 248.0 C1219.3 243.3 1210.3 241.3 1200.0 238.0 C1189.7 234.7 1178.7 230.7 1167.0 228.0 C1155.3 225.3 1141.2 223.0 1130.0 222.0 C1118.8 221.0 1111.7 221.0 1100.0 222.0 C1088.3 223.0 1073.8 225.7 1060.0 228.0 C1046.2 230.3 1024.2 234.7 1017.0 236.0" fill="none" stroke="#c86a84" stroke-width="2.4" opacity="0.9" filter="url(#b1)"/>
<path d="M1366.0 676.0 C1368.2 676.5 1374.8 679.3 1379.0 679.0 C1383.2 678.7 1386.8 676.5 1391.0 674.0 C1395.2 671.5 1399.7 668.8 1404.0 664.0 C1408.3 659.2 1413.3 651.5 1417.0 645.0 C1420.7 638.5 1423.7 632.5 1426.0 625.0 C1428.3 617.5 1429.8 608.5 1431.0 600.0 C1432.2 591.5 1432.9 582.2 1433.5 574.0 C1434.1 565.8 1434.9 559.2 1434.5 551.0 C1434.1 542.8 1432.6 533.0 1431.0 525.0 C1429.4 517.0 1427.2 510.5 1425.0 503.0 C1422.8 495.5 1420.0 486.2 1418.0 480.0 C1416.0 473.8 1415.5 473.0 1413.0 466.0 C1410.5 459.0 1404.7 442.7 1403.0 438.0" fill="none" stroke="#d27991" stroke-width="2.4" opacity="0.85" filter="url(#b1)"/>
<path d="M800.0 290.0 C805.0 286.2 816.7 274.3 830.0 267.0 C843.3 259.7 863.3 251.2 880.0 246.0 C896.7 240.8 913.3 238.3 930.0 236.0 C946.7 233.7 965.8 232.2 980.0 232.0 C994.2 231.8 1009.2 234.5 1015.0 235.0" fill="none" stroke="url(#ltd)" stroke-width="12" clip-path="url(#cface)"/>
<path d="M790.0 306.0 C793.3 303.5 803.3 295.8 810.0 291.0 C816.7 286.2 818.3 283.2 830.0 277.0 C841.7 270.8 863.3 259.6 880.0 254.0 C896.7 248.4 916.7 245.9 930.0 243.5 C943.3 241.1 951.7 240.3 960.0 239.5 C968.3 238.7 973.3 238.4 980.0 238.5 C986.7 238.6 992.5 238.8 1000.0 240.0 C1007.5 241.2 1016.7 244.0 1025.0 246.0 C1033.3 248.0 1045.8 251.0 1050.0 252.0" fill="none" stroke="url(#ltg)" stroke-width="2.8" filter="url(#b1)"/>
<path d="M1000.0 240.0 C1008.3 242.0 1035.0 247.0 1050.0 252.0 C1065.0 257.0 1076.7 262.2 1090.0 270.0 C1103.3 277.8 1118.2 289.0 1130.0 299.0 C1141.8 309.0 1149.3 318.7 1161.0 330.0 C1172.7 341.3 1188.2 354.5 1200.0 367.0 C1211.8 379.5 1222.8 392.8 1232.0 405.0 C1241.2 417.2 1247.8 427.5 1255.0 440.0 C1262.2 452.5 1269.2 466.7 1275.0 480.0 C1280.8 493.3 1285.8 507.5 1290.0 520.0 C1294.2 532.5 1297.2 543.3 1300.0 555.0 C1302.8 566.7 1305.2 579.2 1307.0 590.0 C1308.8 600.8 1309.5 610.8 1311.0 620.0 C1312.5 629.2 1313.7 636.7 1316.0 645.0 C1318.3 653.3 1321.0 661.7 1325.0 670.0 C1329.0 678.3 1335.8 689.2 1340.0 695.0 C1344.2 700.8 1346.7 702.5 1350.0 705.0 C1353.3 707.5 1356.7 709.2 1360.0 710.0 C1363.3 710.8 1366.7 710.7 1370.0 710.0 C1373.3 709.3 1376.5 706.8 1380.0 706.0 C1383.5 705.2 1389.2 705.2 1391.0 705.0" fill="none" stroke="#d4728e" stroke-width="2.6" opacity="0.9" filter="url(#b1)"/>
<path d="M1391.0 705.0 C1392.7 705.3 1397.8 705.0 1401.0 707.0 C1404.2 709.0 1407.8 712.8 1410.0 717.0 C1412.2 721.2 1413.5 726.5 1414.0 732.0 C1414.5 737.5 1413.8 744.3 1413.0 750.0 C1412.2 755.7 1412.0 759.3 1409.0 766.0 C1406.0 772.7 1400.7 781.3 1395.0 790.0 C1389.3 798.7 1382.7 808.5 1375.0 818.0 C1367.3 827.5 1358.0 838.3 1349.0 847.0 C1340.0 855.7 1329.5 863.7 1321.0 870.0 C1312.5 876.3 1301.8 882.5 1298.0 885.0" fill="none" stroke="#c05878" stroke-width="2.6" opacity="0.65" filter="url(#b1)"/>
<g font-family="Liberation Sans,sans-serif" font-size="9.500" font-weight="700">
<text x="365" y="924" fill="#1414f0">Z</text><text x="338" y="943" fill="#10d010">Y</text><text x="376" y="947" fill="#f01818">X</text>
<path d="M363.500 946L364.500 936h-2l3.500-7 2 7h-1.500l-.500 10z" fill="#2828c0"/>
<path d="M362 947l-8-1.500.500 1.500-8-4.500 9-.500.200 1.500 7 2z" fill="#18a830"/>
<path d="M365 946.500l5-1.500-1-1 6 2.500-5 3 .500-1.500-5 .500z" fill="#d83030"/>
</g>
</svg>
<!--/MODEL-->
</div>

<!-- ============ BOTTOM ============ -->
<!--SHAPES-->
<svg class="abs" style="left:7px;top:990px" width="16" height="16" viewBox="0 0 16 16"><path d="M1.500 1.500h11l2 0v11l-2 2h-11z" fill="#fff" stroke="#707070"/><g fill="#909090"><rect x="4" y="4" width="2" height="2"/><rect x="8" y="4" width="2" height="2"/><rect x="4" y="9" width="2" height="2"/><rect x="8" y="9" width="2" height="2"/></g><path d="M12.500 1.500v11l2-0" fill="none" stroke="#707070"/></svg>
<div class="tr" style="left:25px;top:991px;color:#333;letter-spacing:-0.45px">Shapes</div>
<div class="abs" style="left:7px;top:1010px;width:55px;height:5px;background:#d6d6d6"></div>
<!--/SHAPES-->
<div id="status"></div>
<div class="st" style="left:2px;letter-spacing:-0.4px">For Help, press F1</div>
<!--STATUS-->
<div class="st" style="left:1130px;white-space:pre;letter-spacing:-0.45px">View size: 1596 x  804</div>
<svg class="abs" style="left:1261px;top:1020px" width="16" height="16" viewBox="0 0 16 16"><rect x="5" y="1" width="5" height="14" fill="#f0b838" stroke="#a07810" stroke-width=".8"/><path d="M5 4h2.500M5 7h3.500M5 10h2.500M5 13h3.500" stroke="#704c08" stroke-width=".8"/><rect x="1" y="2" width="3" height="3" fill="#f0b838"/></svg>
<div class="st" style="left:1281px;color:#222;-webkit-text-stroke:.25px #222">Units:</div>
<div class="st" style="left:1324px">mm, deg</div>
<div class="abs" style="left:1546px;top:1018px;width:23px;height:21px;background:#cfcfcf"></div>
<div class="abs" style="left:1691px;top:1018px;width:23px;height:21px;background:#cfcfcf"></div>
<svg class="abs" style="left:1385px;top:1020px" width="16" height="16" viewBox="0 0 16 16"><circle cx="6.500" cy="6.500" r="5" fill="#f4f8fc" stroke="#808890" stroke-width="1.300"/><path d="M4 9V4h3l2 2v3z" fill="#fff" stroke="#707070" stroke-width=".7"/><path d="M10.500 10.500l4.500 4.500" stroke="#606060" stroke-width="2"/></svg>
<svg class="abs" style="left:1409px;top:1020px" width="16" height="16" viewBox="0 0 16 16"><circle cx="6.500" cy="6.500" r="5" fill="#f4f8fc" stroke="#808890" stroke-width="1.300"/><rect x="3.500" y="4" width="6" height="5" fill="#fff" stroke="#707070" stroke-width=".7"/><path d="M10.500 10.500l4.500 4.500" stroke="#606060" stroke-width="2"/></svg>
<svg class="abs" style="left:1444px;top:1020px" width="16" height="16" viewBox="0 0 16 16"><path d="M1.500 5.500l3-3h8v8l-3 3h-8z" fill="#f8d828" stroke="#907010" stroke-width=".8"/><path d="M1.500 5.500h8v8M9.500 5.500l3-3" fill="none" stroke="#907010" stroke-width=".8"/><path d="M11 7h4.500" stroke="#d02020" stroke-width="1.400"/><path d="M16 7l-2.500-2v4z" fill="#d02020"/></svg>
<svg class="abs" style="left:1479px;top:1020px" width="16" height="16" viewBox="0 0 16 16"><path d="M1.500 5.500l3.500-4h9.500v9.500l-3.500 4h-9.500z" fill="#3d7cc9" stroke="#2a5a98" stroke-width=".8"/><path d="M1.500 5.500l3.500-4h9.500l-3.500 4z" fill="#e8f0fa" stroke="#2a5a98" stroke-width=".8"/><path d="M11 5.500l3.500-4v9.500l-3.500 4z" fill="#c8d8ec" stroke="#2a5a98" stroke-width=".8"/></svg>
<svg class="abs" style="left:1514px;top:1020px" width="16" height="16" viewBox="0 0 16 16"><path d="M0 7h3M4 7h1" stroke="#303030" stroke-width="1.200" stroke-dasharray="1 1"/><circle cx="8" cy="3" r="1.600" fill="#303030"/><path d="M5 6h6v4H5z" fill="#3878d0"/><rect x="6" y="9" width="8" height="6" fill="#c8d8ec" stroke="#404040" stroke-width=".8"/><rect x="8" y="11" width="4" height="4" fill="#404040"/></svg>
<svg class="abs" style="left:1549px;top:1020px" width="16" height="16" viewBox="0 0 16 16"><path d="M1.500 7l4-3.500 9-2v8l-4 4.500-9 1z" fill="#88aedc" stroke="#4a78b0" stroke-width=".8"/><path d="M1.500 7l9-1.500v8.500M10.500 5.500l4-4" fill="none" stroke="#4a78b0" stroke-width=".8"/><path d="M1.500 7l4-3.500 9-2-4 4z" fill="#c4d8f0" stroke="#4a78b0" stroke-width=".8"/></svg>
<svg class="abs" style="left:1573px;top:1020px" width="16" height="16" viewBox="0 0 16 16"><circle cx="4.500" cy="10.500" r="3" fill="none" stroke="#78a0b8" stroke-width="1.200"/><circle cx="11.500" cy="10.500" r="3" fill="none" stroke="#78a0b8" stroke-width="1.200"/><path d="M7.500 10c.300-.500.700-.500 1 0M1.500 9l2-6M14.500 9l-1-6" fill="none" stroke="#78a0b8" stroke-width="1.100"/></svg>
<svg class="abs" style="left:1605px;top:1020px" width="16" height="16" viewBox="0 0 16 16"><path d="M1.500 5.500l3.500-4h9.500v9.500l-3.500 4h-9.500z" fill="#3d7cc9" stroke="#1f4f8c" stroke-width=".9"/><path d="M1.500 5.500l3.500-4h9.500l-3.500 4z" fill="#6aa0e0" stroke="#1f4f8c" stroke-width=".9"/><path d="M11 5.500l3.500-4v9.500l-3.500 4z" fill="#2a64b0" stroke="#1f4f8c" stroke-width=".9"/></svg>
<svg class="abs" style="left:1638px;top:1020px" width="16" height="16" viewBox="0 0 16 16"><path d="M1 8l4-2h9v6l-4 3H1z" fill="#88a8d8" stroke="#405888" stroke-width=".8"/><path d="M4 3l3-2h6v5H4z" fill="#a8c0e8" stroke="#405888" stroke-width=".8"/><path d="M1 8h9v7M10 8l4-2" fill="none" stroke="#405888" stroke-width=".8"/></svg>
<svg class="abs" style="left:1671px;top:1020px" width="16" height="16" viewBox="0 0 16 16"><path d="M1 6l5-4v2.500c5 0 8 2 8 6-1.500-2.500-4-3-8-3V10z" fill="#c0c0c0"/><path d="M10 9l4 6 .500-3 2.500-.500z" fill="#e8e8e8" stroke="#b0b0b0" stroke-width=".6"/></svg>
<svg class="abs" style="left:1694px;top:1020px" width="16" height="16" viewBox="0 0 16 16"><path d="M4.500 1l8 8.500H8l2.500 5-2 1-2.500-5-1.500 2.500z" fill="#fff" stroke="#101010" stroke-width="1.100"/></svg>
<svg class="abs" style="left:1719px;top:1020px" width="16" height="16" viewBox="0 0 16 16"><rect x="0.500" y="1.500" width="7" height="6" fill="#fff" stroke="#c8c8c8" stroke-width=".8"/><path d="M7 5l6.500 6.500H10l2 4-1.500.700-2-4L7 14z" fill="#fff" stroke="#101010" stroke-width="1"/></svg>
<svg class="abs" style="left:1898px;top:1020px" width="16" height="16" viewBox="0 0 16 16"><rect x="5.500" y="1" width="5" height="4.500" fill="#e02020"/><rect x="1" y="10" width="5" height="4.500" fill="#3878d0"/><rect x="10" y="10" width="5" height="4.500" fill="#f0c020"/><path d="M8 5.500v2.500M3.500 10V8h9v2" fill="none" stroke="#3878d0" stroke-width="1"/></svg>
<div class="abs" style="left:1432px;top:1027px;border:3px solid transparent;border-top:3.500px solid #404040;width:0;height:0"></div>
<div class="abs" style="left:1467px;top:1027px;border:3px solid transparent;border-top:3.500px solid #404040;width:0;height:0"></div>
<div class="abs" style="left:1502px;top:1027px;border:3px solid transparent;border-top:3.500px solid #404040;width:0;height:0"></div>
<div class="abs" style="left:1537px;top:1027px;border:3px solid transparent;border-top:3.500px solid #404040;width:0;height:0"></div>
<div class="abs" style="left:1591px;top:1027px;border:3px solid transparent;border-top:3.500px solid #404040;width:0;height:0"></div>
<div class="abs" style="left:1625px;top:1027px;border:3px solid transparent;border-top:3.500px solid #404040;width:0;height:0"></div>
<div class="abs" style="left:1657px;top:1027px;border:3px solid transparent;border-top:3.500px solid #404040;width:0;height:0"></div>
<div class="abs" style="left:1738px;top:1018px;width:89px;height:21px;background:#fff;border:1px solid #c8c8c8"></div>
<div class="st" style="left:1741px;color:#222">Any</div>
<div class="abs" style="left:1819px;top:1027px;border:3px solid transparent;border-top:3.500px solid #404040;width:0;height:0"></div>
<div class="abs" style="left:1826px;top:1018px;width:68px;height:21px;background:#fff;border:1px solid #c8c8c8"></div>
<div class="st" style="left:1829px;color:#222">Default</div>
<div class="abs" style="left:1885px;top:1027px;border:3px solid transparent;border-top:3.500px solid #404040;width:0;height:0"></div>
<!--/STATUS-->
<div id="taskbar"></div>
<div class="abs" style="left:48px;top:1040px;width:342px;height:2px;background:#e9eef2"></div>

</div>
</body>
</html>
